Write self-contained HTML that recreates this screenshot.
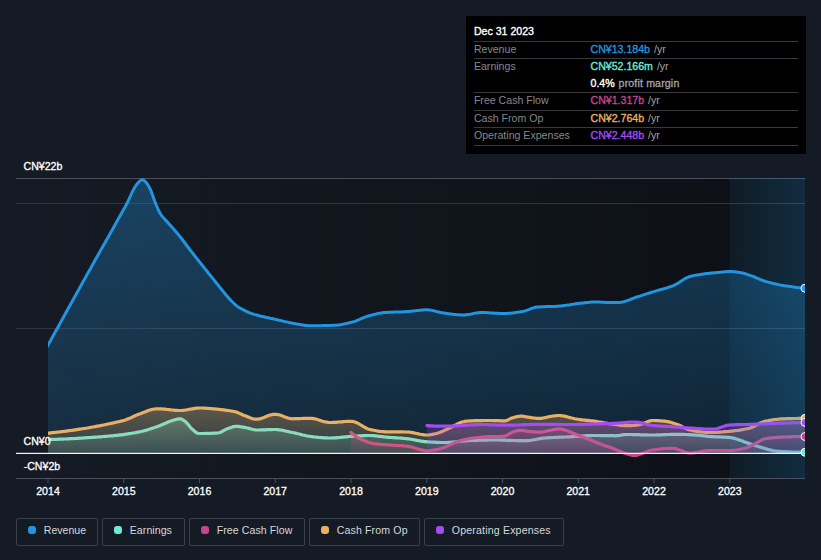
<!DOCTYPE html>
<html lang="en"><head><meta charset="utf-8"><title>Earnings and Revenue History</title>
<style>

html,body{margin:0;padding:0;}
body{width:821px;height:560px;background:#151b24;overflow:hidden;position:relative;font-family:"Liberation Sans", sans-serif;}
.t{position:absolute;white-space:nowrap;line-height:1;}
.ax{font-size:10.6px;color:#fff;-webkit-text-stroke:0.3px #fff;}
.yr{font-size:10.6px;color:#fff;-webkit-text-stroke:0.3px #fff;text-align:center;width:60px;}
#tip{position:absolute;left:466px;top:16px;width:340px;height:138px;background:#000;}
#tip .hd{font-size:10.6px;color:#fff;-webkit-text-stroke:0.35px #fff;left:7.9px;}
#tip .lb{font-size:10.6px;color:#85888d;left:7.9px;}
#tip .vl{font-size:10.6px;left:124.5px;-webkit-text-stroke:0.35px;}
#tip .vl i{font-style:normal;color:#a3a6ab;-webkit-text-stroke:0;margin-left:1px;}
#tip .vl i.pm{-webkit-text-stroke:0.3px #a3a6ab;letter-spacing:0.15px;}
#tip .sep{position:absolute;left:7.6px;width:324.4px;height:1px;background:#37393d;}
.lg{position:absolute;top:518px;height:28px;border:1px solid #3a414c;border-radius:2px;box-sizing:border-box;}
.lg b{position:absolute;top:7px;left:10.75px;width:8px;height:8px;border-radius:3px;}
.lg span{position:absolute;left:26.5px;top:6.3px;font-size:10.6px;line-height:1;color:#d6d8db;white-space:nowrap;}

</style></head><body>
<svg width="821" height="560" viewBox="0 0 821 560" style="position:absolute;left:0;top:0">
<defs>
<linearGradient id="gpast" x1="16" x2="730" y1="0" y2="0" gradientUnits="userSpaceOnUse"><stop offset="0" stop-color="#000" stop-opacity="0"/><stop offset="1" stop-color="#000" stop-opacity="0.37"/></linearGradient>
<linearGradient id="ghl" x1="730" x2="805" y1="0" y2="0" gradientUnits="userSpaceOnUse"><stop offset="0" stop-color="#2394df" stop-opacity="0.08"/><stop offset="1" stop-color="#2394df" stop-opacity="0.21"/></linearGradient>
<linearGradient id="grev" x1="0" x2="0" y1="178" y2="453.5" gradientUnits="userSpaceOnUse"><stop offset="0" stop-color="#2394df" stop-opacity="0.34"/><stop offset="1" stop-color="#2394df" stop-opacity="0.14"/></linearGradient>
<linearGradient id="gearn" x1="0" x2="0" y1="405" y2="453.5" gradientUnits="userSpaceOnUse"><stop offset="0" stop-color="#71e7d6" stop-opacity="0.34"/><stop offset="1" stop-color="#71e7d6" stop-opacity="0.12"/></linearGradient>
<linearGradient id="gfcf" x1="0" x2="0" y1="405" y2="453.5" gradientUnits="userSpaceOnUse"><stop offset="0" stop-color="#c7458b" stop-opacity="0.34"/><stop offset="1" stop-color="#c7458b" stop-opacity="0.12"/></linearGradient>
<linearGradient id="gcfo" x1="0" x2="0" y1="405" y2="453.5" gradientUnits="userSpaceOnUse"><stop offset="0" stop-color="#ebaf64" stop-opacity="0.34"/><stop offset="1" stop-color="#ebaf64" stop-opacity="0.12"/></linearGradient>
<linearGradient id="gopex" x1="0" x2="0" y1="405" y2="453.5" gradientUnits="userSpaceOnUse"><stop offset="0" stop-color="#a54bf0" stop-opacity="0.34"/><stop offset="1" stop-color="#a54bf0" stop-opacity="0.12"/></linearGradient>
<clipPath id="clip"><rect x="48" y="170" width="757" height="320"/></clipPath>
</defs>
<rect x="16" y="178" width="714" height="300.5" fill="url(#gpast)"/>
<rect x="730" y="178" width="75" height="300.5" fill="#000" fill-opacity="0.37"/>
<rect x="16" y="178.0" width="789" height="1" fill="#4a4f59"/>
<rect x="16" y="203.0" width="789" height="1" fill="#30363f"/>
<rect x="16" y="328.0" width="789" height="1" fill="#30363f"/>
<g clip-path="url(#clip)">
<path d="M45.0,350.4 L46.5,347.8 L48.0,345.1 L49.5,342.4 L51.0,339.7 L52.5,337.0 L54.0,334.3 L55.5,331.6 L57.0,328.9 L58.5,326.2 L60.0,323.5 L61.5,320.8 L63.0,318.0 L64.5,315.3 L66.0,312.6 L67.5,309.8 L69.0,307.1 L70.5,304.4 L72.0,301.6 L73.5,298.9 L75.0,296.2 L76.5,293.6 L78.0,290.9 L79.5,288.2 L81.0,285.5 L82.5,282.8 L84.0,280.1 L85.5,277.5 L87.0,274.8 L88.5,272.1 L90.0,269.4 L91.5,266.7 L93.0,264.0 L94.5,261.3 L96.0,258.6 L97.5,256.0 L99.0,253.3 L100.5,250.6 L102.0,248.0 L103.5,245.3 L105.0,242.7 L106.5,240.0 L108.0,237.4 L109.5,234.7 L111.0,232.1 L112.5,229.4 L114.0,226.7 L115.5,224.0 L117.0,221.3 L118.5,218.6 L120.0,215.9 L121.5,213.2 L123.0,210.6 L124.5,207.9 L126.0,205.2 L127.5,202.3 L129.0,199.1 L130.5,195.8 L132.0,192.5 L133.5,189.6 L135.0,187.0 L136.5,184.7 L138.0,182.8 L139.5,181.4 L141.0,180.1 L142.5,179.7 L144.0,180.4 L145.5,181.8 L147.0,183.5 L148.5,185.9 L150.0,188.7 L151.5,192.2 L153.0,196.5 L154.5,200.7 L156.0,204.5 L157.5,208.0 L159.0,211.3 L160.5,214.0 L162.0,216.1 L163.5,217.9 L165.0,219.5 L166.5,221.1 L168.0,222.7 L169.5,224.4 L171.0,226.1 L172.5,227.8 L174.0,229.5 L175.5,231.2 L177.0,232.9 L178.5,234.7 L180.0,236.6 L181.5,238.5 L183.0,240.5 L184.5,242.5 L186.0,244.5 L187.5,246.5 L189.0,248.5 L190.5,250.5 L192.0,252.4 L193.5,254.3 L195.0,256.2 L196.5,258.1 L198.0,260.0 L199.5,261.9 L201.0,263.8 L202.5,265.6 L204.0,267.5 L205.5,269.4 L207.0,271.3 L208.5,273.2 L210.0,275.0 L211.5,276.9 L213.0,278.8 L214.5,280.6 L216.0,282.5 L217.5,284.4 L219.0,286.3 L220.5,288.1 L222.0,290.0 L223.5,291.9 L225.0,293.8 L226.5,295.5 L228.0,297.3 L229.5,298.9 L231.0,300.5 L232.5,302.0 L234.0,303.5 L235.5,304.9 L237.0,306.1 L238.5,307.2 L240.0,308.0 L241.5,308.9 L243.0,309.6 L244.5,310.4 L246.0,311.2 L247.5,311.9 L249.0,312.6 L250.5,313.2 L252.0,313.7 L253.5,314.1 L255.0,314.6 L256.5,315.0 L258.0,315.4 L259.5,315.8 L261.0,316.2 L262.5,316.5 L264.0,316.8 L265.5,317.2 L267.0,317.5 L268.5,317.8 L270.0,318.2 L271.5,318.5 L273.0,318.8 L274.5,319.1 L276.0,319.5 L277.5,319.8 L279.0,320.2 L280.5,320.5 L282.0,320.9 L283.5,321.2 L285.0,321.6 L286.5,321.9 L288.0,322.3 L289.5,322.6 L291.0,322.9 L292.5,323.2 L294.0,323.5 L295.5,323.8 L297.0,324.0 L298.5,324.3 L300.0,324.5 L301.5,324.7 L303.0,325.0 L304.5,325.2 L306.0,325.4 L307.5,325.6 L309.0,325.7 L310.5,325.7 L312.0,325.7 L313.5,325.7 L315.0,325.7 L316.5,325.7 L318.0,325.7 L319.5,325.7 L321.0,325.7 L322.5,325.6 L324.0,325.6 L325.5,325.6 L327.0,325.5 L328.5,325.5 L330.0,325.4 L331.5,325.4 L333.0,325.3 L334.5,325.3 L336.0,325.2 L337.5,325.1 L339.0,324.9 L340.5,324.7 L342.0,324.4 L343.5,324.1 L345.0,323.8 L346.5,323.5 L348.0,323.1 L349.5,322.8 L351.0,322.4 L352.5,322.0 L354.0,321.6 L355.5,321.1 L357.0,320.5 L358.5,319.8 L360.0,319.2 L361.5,318.5 L363.0,317.9 L364.5,317.3 L366.0,316.7 L367.5,316.2 L369.0,315.8 L370.5,315.4 L372.0,315.0 L373.5,314.6 L375.0,314.2 L376.5,313.9 L378.0,313.5 L379.5,313.2 L381.0,313.0 L382.5,312.7 L384.0,312.6 L385.5,312.5 L387.0,312.4 L388.5,312.3 L390.0,312.3 L391.5,312.2 L393.0,312.2 L394.5,312.1 L396.0,312.1 L397.5,312.0 L399.0,312.0 L400.5,312.0 L402.0,311.9 L403.5,311.8 L405.0,311.8 L406.5,311.6 L408.0,311.5 L409.5,311.4 L411.0,311.2 L412.5,311.0 L414.0,310.9 L415.5,310.7 L417.0,310.5 L418.5,310.4 L420.0,310.2 L421.5,310.0 L423.0,309.9 L424.5,309.8 L426.0,309.8 L427.5,309.8 L429.0,309.9 L430.5,310.1 L432.0,310.4 L433.5,310.7 L435.0,311.1 L436.5,311.5 L438.0,311.8 L439.5,312.2 L441.0,312.5 L442.5,312.9 L444.0,313.1 L445.5,313.3 L447.0,313.5 L448.5,313.7 L450.0,313.9 L451.5,314.1 L453.0,314.3 L454.5,314.4 L456.0,314.6 L457.5,314.7 L459.0,314.8 L460.5,314.9 L462.0,315.0 L463.5,315.0 L465.0,315.0 L466.5,314.8 L468.0,314.6 L469.5,314.4 L471.0,314.1 L472.5,313.8 L474.0,313.4 L475.5,313.1 L477.0,312.9 L478.5,312.7 L480.0,312.5 L481.5,312.5 L483.0,312.5 L484.5,312.6 L486.0,312.6 L487.5,312.7 L489.0,312.8 L490.5,312.9 L492.0,313.0 L493.5,313.1 L495.0,313.2 L496.5,313.3 L498.0,313.3 L499.5,313.4 L501.0,313.5 L502.5,313.5 L504.0,313.5 L505.5,313.5 L507.0,313.4 L508.5,313.3 L510.0,313.2 L511.5,313.1 L513.0,312.9 L514.5,312.7 L516.0,312.5 L517.5,312.3 L519.0,312.1 L520.5,311.8 L522.0,311.6 L523.5,311.3 L525.0,310.9 L526.5,310.4 L528.0,309.9 L529.5,309.3 L531.0,308.7 L532.5,308.1 L534.0,307.7 L535.5,307.3 L537.0,307.0 L538.5,306.9 L540.0,306.9 L541.5,306.8 L543.0,306.7 L544.5,306.7 L546.0,306.6 L547.5,306.6 L549.0,306.6 L550.5,306.5 L552.0,306.5 L553.5,306.4 L555.0,306.4 L556.5,306.3 L558.0,306.2 L559.5,306.1 L561.0,306.0 L562.5,305.8 L564.0,305.6 L565.5,305.4 L567.0,305.1 L568.5,304.9 L570.0,304.7 L571.5,304.4 L573.0,304.2 L574.5,304.0 L576.0,303.7 L577.5,303.5 L579.0,303.4 L580.5,303.2 L582.0,303.0 L583.5,302.9 L585.0,302.7 L586.5,302.5 L588.0,302.4 L589.5,302.3 L591.0,302.1 L592.5,302.1 L594.0,302.0 L595.5,302.0 L597.0,302.0 L598.5,302.1 L600.0,302.1 L601.5,302.2 L603.0,302.3 L604.5,302.3 L606.0,302.4 L607.5,302.5 L609.0,302.5 L610.5,302.6 L612.0,302.6 L613.5,302.6 L615.0,302.6 L616.5,302.6 L618.0,302.5 L619.5,302.5 L621.0,302.3 L622.5,302.0 L624.0,301.7 L625.5,301.2 L627.0,300.7 L628.5,300.1 L630.0,299.6 L631.5,299.0 L633.0,298.4 L634.5,297.8 L636.0,297.2 L637.5,296.8 L639.0,296.3 L640.5,295.8 L642.0,295.3 L643.5,294.9 L645.0,294.4 L646.5,293.9 L648.0,293.4 L649.5,293.0 L651.0,292.5 L652.5,292.0 L654.0,291.6 L655.5,291.1 L657.0,290.7 L658.5,290.2 L660.0,289.8 L661.5,289.4 L663.0,289.0 L664.5,288.6 L666.0,288.2 L667.5,287.7 L669.0,287.2 L670.5,286.7 L672.0,286.2 L673.5,285.6 L675.0,284.8 L676.5,284.0 L678.0,283.1 L679.5,282.2 L681.0,281.2 L682.5,280.2 L684.0,279.3 L685.5,278.4 L687.0,277.7 L688.5,277.0 L690.0,276.5 L691.5,276.1 L693.0,275.7 L694.5,275.4 L696.0,275.1 L697.5,274.9 L699.0,274.7 L700.5,274.4 L702.0,274.2 L703.5,274.0 L705.0,273.8 L706.5,273.6 L708.0,273.5 L709.5,273.3 L711.0,273.1 L712.5,273.0 L714.0,272.8 L715.5,272.7 L717.0,272.5 L718.5,272.4 L720.0,272.2 L721.5,272.1 L723.0,271.9 L724.5,271.8 L726.0,271.7 L727.5,271.6 L729.0,271.5 L730.5,271.5 L732.0,271.6 L733.5,271.7 L735.0,271.8 L736.5,272.0 L738.0,272.2 L739.5,272.4 L741.0,272.7 L742.5,273.0 L744.0,273.4 L745.5,273.8 L747.0,274.3 L748.5,274.8 L750.0,275.4 L751.5,275.9 L753.0,276.4 L754.5,277.0 L756.0,277.6 L757.5,278.3 L759.0,278.9 L760.5,279.6 L762.0,280.2 L763.5,280.8 L765.0,281.2 L766.5,281.7 L768.0,282.1 L769.5,282.5 L771.0,282.9 L772.5,283.3 L774.0,283.6 L775.5,284.0 L777.0,284.3 L778.5,284.6 L780.0,284.9 L781.5,285.2 L783.0,285.4 L784.5,285.7 L786.0,285.9 L787.5,286.1 L789.0,286.4 L790.5,286.6 L792.0,286.8 L793.5,287.0 L795.0,287.2 L796.5,287.4 L798.0,287.6 L799.5,287.7 L801.0,287.9 L802.5,288.0 L804.0,288.1 L805.0,288.2 L805.0,453.5 L45.0,453.5 Z" fill="url(#grev)"/>
<path d="M45.0,350.4 L46.5,347.8 L48.0,345.1 L49.5,342.4 L51.0,339.7 L52.5,337.0 L54.0,334.3 L55.5,331.6 L57.0,328.9 L58.5,326.2 L60.0,323.5 L61.5,320.8 L63.0,318.0 L64.5,315.3 L66.0,312.6 L67.5,309.8 L69.0,307.1 L70.5,304.4 L72.0,301.6 L73.5,298.9 L75.0,296.2 L76.5,293.6 L78.0,290.9 L79.5,288.2 L81.0,285.5 L82.5,282.8 L84.0,280.1 L85.5,277.5 L87.0,274.8 L88.5,272.1 L90.0,269.4 L91.5,266.7 L93.0,264.0 L94.5,261.3 L96.0,258.6 L97.5,256.0 L99.0,253.3 L100.5,250.6 L102.0,248.0 L103.5,245.3 L105.0,242.7 L106.5,240.0 L108.0,237.4 L109.5,234.7 L111.0,232.1 L112.5,229.4 L114.0,226.7 L115.5,224.0 L117.0,221.3 L118.5,218.6 L120.0,215.9 L121.5,213.2 L123.0,210.6 L124.5,207.9 L126.0,205.2 L127.5,202.3 L129.0,199.1 L130.5,195.8 L132.0,192.5 L133.5,189.6 L135.0,187.0 L136.5,184.7 L138.0,182.8 L139.5,181.4 L141.0,180.1 L142.5,179.7 L144.0,180.4 L145.5,181.8 L147.0,183.5 L148.5,185.9 L150.0,188.7 L151.5,192.2 L153.0,196.5 L154.5,200.7 L156.0,204.5 L157.5,208.0 L159.0,211.3 L160.5,214.0 L162.0,216.1 L163.5,217.9 L165.0,219.5 L166.5,221.1 L168.0,222.7 L169.5,224.4 L171.0,226.1 L172.5,227.8 L174.0,229.5 L175.5,231.2 L177.0,232.9 L178.5,234.7 L180.0,236.6 L181.5,238.5 L183.0,240.5 L184.5,242.5 L186.0,244.5 L187.5,246.5 L189.0,248.5 L190.5,250.5 L192.0,252.4 L193.5,254.3 L195.0,256.2 L196.5,258.1 L198.0,260.0 L199.5,261.9 L201.0,263.8 L202.5,265.6 L204.0,267.5 L205.5,269.4 L207.0,271.3 L208.5,273.2 L210.0,275.0 L211.5,276.9 L213.0,278.8 L214.5,280.6 L216.0,282.5 L217.5,284.4 L219.0,286.3 L220.5,288.1 L222.0,290.0 L223.5,291.9 L225.0,293.8 L226.5,295.5 L228.0,297.3 L229.5,298.9 L231.0,300.5 L232.5,302.0 L234.0,303.5 L235.5,304.9 L237.0,306.1 L238.5,307.2 L240.0,308.0 L241.5,308.9 L243.0,309.6 L244.5,310.4 L246.0,311.2 L247.5,311.9 L249.0,312.6 L250.5,313.2 L252.0,313.7 L253.5,314.1 L255.0,314.6 L256.5,315.0 L258.0,315.4 L259.5,315.8 L261.0,316.2 L262.5,316.5 L264.0,316.8 L265.5,317.2 L267.0,317.5 L268.5,317.8 L270.0,318.2 L271.5,318.5 L273.0,318.8 L274.5,319.1 L276.0,319.5 L277.5,319.8 L279.0,320.2 L280.5,320.5 L282.0,320.9 L283.5,321.2 L285.0,321.6 L286.5,321.9 L288.0,322.3 L289.5,322.6 L291.0,322.9 L292.5,323.2 L294.0,323.5 L295.5,323.8 L297.0,324.0 L298.5,324.3 L300.0,324.5 L301.5,324.7 L303.0,325.0 L304.5,325.2 L306.0,325.4 L307.5,325.6 L309.0,325.7 L310.5,325.7 L312.0,325.7 L313.5,325.7 L315.0,325.7 L316.5,325.7 L318.0,325.7 L319.5,325.7 L321.0,325.7 L322.5,325.6 L324.0,325.6 L325.5,325.6 L327.0,325.5 L328.5,325.5 L330.0,325.4 L331.5,325.4 L333.0,325.3 L334.5,325.3 L336.0,325.2 L337.5,325.1 L339.0,324.9 L340.5,324.7 L342.0,324.4 L343.5,324.1 L345.0,323.8 L346.5,323.5 L348.0,323.1 L349.5,322.8 L351.0,322.4 L352.5,322.0 L354.0,321.6 L355.5,321.1 L357.0,320.5 L358.5,319.8 L360.0,319.2 L361.5,318.5 L363.0,317.9 L364.5,317.3 L366.0,316.7 L367.5,316.2 L369.0,315.8 L370.5,315.4 L372.0,315.0 L373.5,314.6 L375.0,314.2 L376.5,313.9 L378.0,313.5 L379.5,313.2 L381.0,313.0 L382.5,312.7 L384.0,312.6 L385.5,312.5 L387.0,312.4 L388.5,312.3 L390.0,312.3 L391.5,312.2 L393.0,312.2 L394.5,312.1 L396.0,312.1 L397.5,312.0 L399.0,312.0 L400.5,312.0 L402.0,311.9 L403.5,311.8 L405.0,311.8 L406.5,311.6 L408.0,311.5 L409.5,311.4 L411.0,311.2 L412.5,311.0 L414.0,310.9 L415.5,310.7 L417.0,310.5 L418.5,310.4 L420.0,310.2 L421.5,310.0 L423.0,309.9 L424.5,309.8 L426.0,309.8 L427.5,309.8 L429.0,309.9 L430.5,310.1 L432.0,310.4 L433.5,310.7 L435.0,311.1 L436.5,311.5 L438.0,311.8 L439.5,312.2 L441.0,312.5 L442.5,312.9 L444.0,313.1 L445.5,313.3 L447.0,313.5 L448.5,313.7 L450.0,313.9 L451.5,314.1 L453.0,314.3 L454.5,314.4 L456.0,314.6 L457.5,314.7 L459.0,314.8 L460.5,314.9 L462.0,315.0 L463.5,315.0 L465.0,315.0 L466.5,314.8 L468.0,314.6 L469.5,314.4 L471.0,314.1 L472.5,313.8 L474.0,313.4 L475.5,313.1 L477.0,312.9 L478.5,312.7 L480.0,312.5 L481.5,312.5 L483.0,312.5 L484.5,312.6 L486.0,312.6 L487.5,312.7 L489.0,312.8 L490.5,312.9 L492.0,313.0 L493.5,313.1 L495.0,313.2 L496.5,313.3 L498.0,313.3 L499.5,313.4 L501.0,313.5 L502.5,313.5 L504.0,313.5 L505.5,313.5 L507.0,313.4 L508.5,313.3 L510.0,313.2 L511.5,313.1 L513.0,312.9 L514.5,312.7 L516.0,312.5 L517.5,312.3 L519.0,312.1 L520.5,311.8 L522.0,311.6 L523.5,311.3 L525.0,310.9 L526.5,310.4 L528.0,309.9 L529.5,309.3 L531.0,308.7 L532.5,308.1 L534.0,307.7 L535.5,307.3 L537.0,307.0 L538.5,306.9 L540.0,306.9 L541.5,306.8 L543.0,306.7 L544.5,306.7 L546.0,306.6 L547.5,306.6 L549.0,306.6 L550.5,306.5 L552.0,306.5 L553.5,306.4 L555.0,306.4 L556.5,306.3 L558.0,306.2 L559.5,306.1 L561.0,306.0 L562.5,305.8 L564.0,305.6 L565.5,305.4 L567.0,305.1 L568.5,304.9 L570.0,304.7 L571.5,304.4 L573.0,304.2 L574.5,304.0 L576.0,303.7 L577.5,303.5 L579.0,303.4 L580.5,303.2 L582.0,303.0 L583.5,302.9 L585.0,302.7 L586.5,302.5 L588.0,302.4 L589.5,302.3 L591.0,302.1 L592.5,302.1 L594.0,302.0 L595.5,302.0 L597.0,302.0 L598.5,302.1 L600.0,302.1 L601.5,302.2 L603.0,302.3 L604.5,302.3 L606.0,302.4 L607.5,302.5 L609.0,302.5 L610.5,302.6 L612.0,302.6 L613.5,302.6 L615.0,302.6 L616.5,302.6 L618.0,302.5 L619.5,302.5 L621.0,302.3 L622.5,302.0 L624.0,301.7 L625.5,301.2 L627.0,300.7 L628.5,300.1 L630.0,299.6 L631.5,299.0 L633.0,298.4 L634.5,297.8 L636.0,297.2 L637.5,296.8 L639.0,296.3 L640.5,295.8 L642.0,295.3 L643.5,294.9 L645.0,294.4 L646.5,293.9 L648.0,293.4 L649.5,293.0 L651.0,292.5 L652.5,292.0 L654.0,291.6 L655.5,291.1 L657.0,290.7 L658.5,290.2 L660.0,289.8 L661.5,289.4 L663.0,289.0 L664.5,288.6 L666.0,288.2 L667.5,287.7 L669.0,287.2 L670.5,286.7 L672.0,286.2 L673.5,285.6 L675.0,284.8 L676.5,284.0 L678.0,283.1 L679.5,282.2 L681.0,281.2 L682.5,280.2 L684.0,279.3 L685.5,278.4 L687.0,277.7 L688.5,277.0 L690.0,276.5 L691.5,276.1 L693.0,275.7 L694.5,275.4 L696.0,275.1 L697.5,274.9 L699.0,274.7 L700.5,274.4 L702.0,274.2 L703.5,274.0 L705.0,273.8 L706.5,273.6 L708.0,273.5 L709.5,273.3 L711.0,273.1 L712.5,273.0 L714.0,272.8 L715.5,272.7 L717.0,272.5 L718.5,272.4 L720.0,272.2 L721.5,272.1 L723.0,271.9 L724.5,271.8 L726.0,271.7 L727.5,271.6 L729.0,271.5 L730.5,271.5 L732.0,271.6 L733.5,271.7 L735.0,271.8 L736.5,272.0 L738.0,272.2 L739.5,272.4 L741.0,272.7 L742.5,273.0 L744.0,273.4 L745.5,273.8 L747.0,274.3 L748.5,274.8 L750.0,275.4 L751.5,275.9 L753.0,276.4 L754.5,277.0 L756.0,277.6 L757.5,278.3 L759.0,278.9 L760.5,279.6 L762.0,280.2 L763.5,280.8 L765.0,281.2 L766.5,281.7 L768.0,282.1 L769.5,282.5 L771.0,282.9 L772.5,283.3 L774.0,283.6 L775.5,284.0 L777.0,284.3 L778.5,284.6 L780.0,284.9 L781.5,285.2 L783.0,285.4 L784.5,285.7 L786.0,285.9 L787.5,286.1 L789.0,286.4 L790.5,286.6 L792.0,286.8 L793.5,287.0 L795.0,287.2 L796.5,287.4 L798.0,287.6 L799.5,287.7 L801.0,287.9 L802.5,288.0 L804.0,288.1 L805.0,288.2" fill="none" stroke="#2394df" stroke-width="3.0" stroke-linejoin="round" stroke-linecap="round"/>
<path d="M45.0,439.6 L46.5,439.5 L48.0,439.5 L49.5,439.5 L51.0,439.4 L52.5,439.4 L54.0,439.3 L55.5,439.3 L57.0,439.3 L58.5,439.2 L60.0,439.2 L61.5,439.1 L63.0,439.1 L64.5,439.0 L66.0,439.0 L67.5,438.9 L69.0,438.8 L70.5,438.7 L72.0,438.7 L73.5,438.6 L75.0,438.5 L76.5,438.4 L78.0,438.3 L79.5,438.2 L81.0,438.1 L82.5,438.0 L84.0,437.9 L85.5,437.8 L87.0,437.7 L88.5,437.6 L90.0,437.5 L91.5,437.4 L93.0,437.3 L94.5,437.2 L96.0,437.1 L97.5,437.0 L99.0,436.9 L100.5,436.8 L102.0,436.7 L103.5,436.5 L105.0,436.4 L106.5,436.3 L108.0,436.2 L109.5,436.0 L111.0,435.9 L112.5,435.8 L114.0,435.6 L115.5,435.4 L117.0,435.3 L118.5,435.1 L120.0,434.9 L121.5,434.8 L123.0,434.6 L124.5,434.4 L126.0,434.2 L127.5,433.9 L129.0,433.7 L130.5,433.5 L132.0,433.2 L133.5,433.0 L135.0,432.7 L136.5,432.4 L138.0,432.2 L139.5,431.9 L141.0,431.5 L142.5,431.2 L144.0,430.8 L145.5,430.4 L147.0,429.9 L148.5,429.5 L150.0,429.0 L151.5,428.5 L153.0,428.0 L154.5,427.5 L156.0,426.9 L157.5,426.4 L159.0,425.9 L160.5,425.3 L162.0,424.7 L163.5,424.1 L165.0,423.4 L166.5,422.8 L168.0,422.1 L169.5,421.5 L171.0,421.0 L172.5,420.5 L174.0,420.0 L175.5,419.6 L177.0,419.2 L178.5,418.9 L180.0,418.8 L181.5,419.1 L183.0,419.9 L184.5,420.9 L186.0,422.1 L187.5,423.7 L189.0,425.6 L190.5,427.5 L192.0,429.1 L193.5,430.3 L195.0,431.6 L196.5,432.7 L198.0,433.4 L199.5,433.5 L201.0,433.5 L202.5,433.5 L204.0,433.5 L205.5,433.4 L207.0,433.4 L208.5,433.4 L210.0,433.3 L211.5,433.3 L213.0,433.2 L214.5,433.2 L216.0,433.1 L217.5,433.0 L219.0,432.7 L220.5,432.2 L222.0,431.5 L223.5,430.7 L225.0,429.9 L226.5,429.1 L228.0,428.6 L229.5,428.0 L231.0,427.4 L232.5,426.9 L234.0,426.5 L235.5,426.3 L237.0,426.3 L238.5,426.4 L240.0,426.6 L241.5,426.9 L243.0,427.1 L244.5,427.4 L246.0,427.7 L247.5,428.0 L249.0,428.4 L250.5,428.8 L252.0,429.2 L253.5,429.5 L255.0,429.8 L256.5,430.0 L258.0,430.0 L259.5,430.0 L261.0,429.9 L262.5,429.9 L264.0,429.8 L265.5,429.8 L267.0,429.7 L268.5,429.7 L270.0,429.6 L271.5,429.6 L273.0,429.5 L274.5,429.5 L276.0,429.5 L277.5,429.6 L279.0,429.8 L280.5,430.0 L282.0,430.2 L283.5,430.5 L285.0,430.9 L286.5,431.2 L288.0,431.5 L289.5,431.9 L291.0,432.2 L292.5,432.5 L294.0,432.8 L295.5,433.1 L297.0,433.5 L298.5,433.8 L300.0,434.2 L301.5,434.6 L303.0,435.0 L304.5,435.3 L306.0,435.7 L307.5,436.0 L309.0,436.2 L310.5,436.5 L312.0,436.7 L313.5,436.9 L315.0,437.0 L316.5,437.2 L318.0,437.3 L319.5,437.5 L321.0,437.6 L322.5,437.7 L324.0,437.8 L325.5,437.9 L327.0,437.9 L328.5,438.0 L330.0,438.0 L331.5,438.0 L333.0,437.9 L334.5,437.9 L336.0,437.8 L337.5,437.6 L339.0,437.5 L340.5,437.4 L342.0,437.2 L343.5,437.1 L345.0,436.9 L346.5,436.8 L348.0,436.6 L349.5,436.5 L351.0,436.4 L352.5,436.3 L354.0,436.2 L355.5,436.1 L357.0,436.0 L358.5,435.9 L360.0,435.9 L361.5,435.8 L363.0,435.7 L364.5,435.6 L366.0,435.6 L367.5,435.5 L369.0,435.5 L370.5,435.5 L372.0,435.6 L373.5,435.7 L375.0,435.8 L376.5,436.0 L378.0,436.1 L379.5,436.3 L381.0,436.5 L382.5,436.7 L384.0,436.9 L385.5,437.0 L387.0,437.2 L388.5,437.3 L390.0,437.4 L391.5,437.5 L393.0,437.6 L394.5,437.7 L396.0,437.8 L397.5,437.9 L399.0,438.0 L400.5,438.1 L402.0,438.2 L403.5,438.4 L405.0,438.5 L406.5,438.6 L408.0,438.8 L409.5,439.0 L411.0,439.2 L412.5,439.5 L414.0,439.8 L415.5,440.1 L417.0,440.4 L418.5,440.7 L420.0,440.9 L421.5,441.2 L423.0,441.4 L424.5,441.6 L426.0,441.7 L427.5,441.8 L429.0,441.9 L430.5,442.0 L432.0,442.1 L433.5,442.2 L435.0,442.2 L436.5,442.3 L438.0,442.4 L439.5,442.4 L441.0,442.5 L442.5,442.5 L444.0,442.5 L445.5,442.5 L447.0,442.5 L448.5,442.4 L450.0,442.3 L451.5,442.2 L453.0,442.1 L454.5,441.9 L456.0,441.8 L457.5,441.6 L459.0,441.4 L460.5,441.3 L462.0,441.1 L463.5,440.9 L465.0,440.8 L466.5,440.7 L468.0,440.6 L469.5,440.5 L471.0,440.5 L472.5,440.4 L474.0,440.4 L475.5,440.3 L477.0,440.3 L478.5,440.2 L480.0,440.2 L481.5,440.2 L483.0,440.1 L484.5,440.1 L486.0,440.1 L487.5,440.1 L489.0,440.0 L490.5,440.0 L492.0,440.0 L493.5,440.0 L495.0,440.0 L496.5,440.0 L498.0,440.0 L499.5,440.0 L501.0,440.1 L502.5,440.1 L504.0,440.2 L505.5,440.2 L507.0,440.3 L508.5,440.3 L510.0,440.4 L511.5,440.4 L513.0,440.5 L514.5,440.5 L516.0,440.6 L517.5,440.6 L519.0,440.7 L520.5,440.7 L522.0,440.7 L523.5,440.7 L525.0,440.8 L526.5,440.7 L528.0,440.6 L529.5,440.5 L531.0,440.3 L532.5,440.0 L534.0,439.7 L535.5,439.5 L537.0,439.2 L538.5,438.9 L540.0,438.6 L541.5,438.4 L543.0,438.2 L544.5,438.0 L546.0,437.9 L547.5,437.8 L549.0,437.7 L550.5,437.6 L552.0,437.6 L553.5,437.5 L555.0,437.4 L556.5,437.3 L558.0,437.3 L559.5,437.2 L561.0,437.1 L562.5,437.1 L564.0,437.0 L565.5,437.0 L567.0,436.9 L568.5,436.8 L570.0,436.8 L571.5,436.7 L573.0,436.6 L574.5,436.5 L576.0,436.4 L577.5,436.3 L579.0,436.2 L580.5,436.1 L582.0,436.0 L583.5,435.9 L585.0,435.8 L586.5,435.7 L588.0,435.7 L589.5,435.6 L591.0,435.6 L592.5,435.5 L594.0,435.5 L595.5,435.5 L597.0,435.5 L598.5,435.5 L600.0,435.5 L601.5,435.6 L603.0,435.6 L604.5,435.6 L606.0,435.6 L607.5,435.7 L609.0,435.7 L610.5,435.7 L612.0,435.7 L613.5,435.7 L615.0,435.8 L616.5,435.7 L618.0,435.6 L619.5,435.4 L621.0,435.2 L622.5,434.9 L624.0,434.7 L625.5,434.6 L627.0,434.5 L628.5,434.5 L630.0,434.5 L631.5,434.5 L633.0,434.6 L634.5,434.6 L636.0,434.6 L637.5,434.7 L639.0,434.7 L640.5,434.8 L642.0,434.8 L643.5,434.9 L645.0,434.9 L646.5,434.9 L648.0,435.0 L649.5,435.0 L651.0,435.0 L652.5,435.0 L654.0,435.0 L655.5,435.0 L657.0,434.9 L658.5,434.9 L660.0,434.8 L661.5,434.8 L663.0,434.7 L664.5,434.6 L666.0,434.6 L667.5,434.5 L669.0,434.5 L670.5,434.4 L672.0,434.3 L673.5,434.3 L675.0,434.3 L676.5,434.3 L678.0,434.3 L679.5,434.3 L681.0,434.3 L682.5,434.3 L684.0,434.4 L685.5,434.5 L687.0,434.5 L688.5,434.6 L690.0,434.7 L691.5,434.8 L693.0,434.9 L694.5,435.0 L696.0,435.1 L697.5,435.2 L699.0,435.3 L700.5,435.5 L702.0,435.7 L703.5,435.9 L705.0,436.0 L706.5,436.2 L708.0,436.3 L709.5,436.5 L711.0,436.6 L712.5,436.6 L714.0,436.7 L715.5,436.8 L717.0,436.8 L718.5,436.9 L720.0,436.9 L721.5,437.0 L723.0,437.1 L724.5,437.1 L726.0,437.2 L727.5,437.3 L729.0,437.4 L730.5,437.6 L732.0,437.8 L733.5,438.1 L735.0,438.5 L736.5,439.0 L738.0,439.5 L739.5,440.0 L741.0,440.6 L742.5,441.1 L744.0,441.7 L745.5,442.2 L747.0,442.7 L748.5,443.2 L750.0,443.7 L751.5,444.2 L753.0,444.7 L754.5,445.3 L756.0,445.8 L757.5,446.2 L759.0,446.7 L760.5,447.1 L762.0,447.6 L763.5,448.0 L765.0,448.5 L766.5,448.9 L768.0,449.4 L769.5,449.8 L771.0,450.1 L772.5,450.5 L774.0,450.8 L775.5,451.0 L777.0,451.2 L778.5,451.3 L780.0,451.4 L781.5,451.5 L783.0,451.6 L784.5,451.7 L786.0,451.7 L787.5,451.8 L789.0,451.9 L790.5,451.9 L792.0,452.0 L793.5,452.0 L795.0,452.1 L796.5,452.1 L798.0,452.2 L799.5,452.2 L801.0,452.2 L802.5,452.3 L804.0,452.3 L805.0,452.3 L805.0,453.5 L45.0,453.5 Z" fill="url(#gearn)"/>
<path d="M45.0,439.6 L46.5,439.5 L48.0,439.5 L49.5,439.5 L51.0,439.4 L52.5,439.4 L54.0,439.3 L55.5,439.3 L57.0,439.3 L58.5,439.2 L60.0,439.2 L61.5,439.1 L63.0,439.1 L64.5,439.0 L66.0,439.0 L67.5,438.9 L69.0,438.8 L70.5,438.7 L72.0,438.7 L73.5,438.6 L75.0,438.5 L76.5,438.4 L78.0,438.3 L79.5,438.2 L81.0,438.1 L82.5,438.0 L84.0,437.9 L85.5,437.8 L87.0,437.7 L88.5,437.6 L90.0,437.5 L91.5,437.4 L93.0,437.3 L94.5,437.2 L96.0,437.1 L97.5,437.0 L99.0,436.9 L100.5,436.8 L102.0,436.7 L103.5,436.5 L105.0,436.4 L106.5,436.3 L108.0,436.2 L109.5,436.0 L111.0,435.9 L112.5,435.8 L114.0,435.6 L115.5,435.4 L117.0,435.3 L118.5,435.1 L120.0,434.9 L121.5,434.8 L123.0,434.6 L124.5,434.4 L126.0,434.2 L127.5,433.9 L129.0,433.7 L130.5,433.5 L132.0,433.2 L133.5,433.0 L135.0,432.7 L136.5,432.4 L138.0,432.2 L139.5,431.9 L141.0,431.5 L142.5,431.2 L144.0,430.8 L145.5,430.4 L147.0,429.9 L148.5,429.5 L150.0,429.0 L151.5,428.5 L153.0,428.0 L154.5,427.5 L156.0,426.9 L157.5,426.4 L159.0,425.9 L160.5,425.3 L162.0,424.7 L163.5,424.1 L165.0,423.4 L166.5,422.8 L168.0,422.1 L169.5,421.5 L171.0,421.0 L172.5,420.5 L174.0,420.0 L175.5,419.6 L177.0,419.2 L178.5,418.9 L180.0,418.8 L181.5,419.1 L183.0,419.9 L184.5,420.9 L186.0,422.1 L187.5,423.7 L189.0,425.6 L190.5,427.5 L192.0,429.1 L193.5,430.3 L195.0,431.6 L196.5,432.7 L198.0,433.4 L199.5,433.5 L201.0,433.5 L202.5,433.5 L204.0,433.5 L205.5,433.4 L207.0,433.4 L208.5,433.4 L210.0,433.3 L211.5,433.3 L213.0,433.2 L214.5,433.2 L216.0,433.1 L217.5,433.0 L219.0,432.7 L220.5,432.2 L222.0,431.5 L223.5,430.7 L225.0,429.9 L226.5,429.1 L228.0,428.6 L229.5,428.0 L231.0,427.4 L232.5,426.9 L234.0,426.5 L235.5,426.3 L237.0,426.3 L238.5,426.4 L240.0,426.6 L241.5,426.9 L243.0,427.1 L244.5,427.4 L246.0,427.7 L247.5,428.0 L249.0,428.4 L250.5,428.8 L252.0,429.2 L253.5,429.5 L255.0,429.8 L256.5,430.0 L258.0,430.0 L259.5,430.0 L261.0,429.9 L262.5,429.9 L264.0,429.8 L265.5,429.8 L267.0,429.7 L268.5,429.7 L270.0,429.6 L271.5,429.6 L273.0,429.5 L274.5,429.5 L276.0,429.5 L277.5,429.6 L279.0,429.8 L280.5,430.0 L282.0,430.2 L283.5,430.5 L285.0,430.9 L286.5,431.2 L288.0,431.5 L289.5,431.9 L291.0,432.2 L292.5,432.5 L294.0,432.8 L295.5,433.1 L297.0,433.5 L298.5,433.8 L300.0,434.2 L301.5,434.6 L303.0,435.0 L304.5,435.3 L306.0,435.7 L307.5,436.0 L309.0,436.2 L310.5,436.5 L312.0,436.7 L313.5,436.9 L315.0,437.0 L316.5,437.2 L318.0,437.3 L319.5,437.5 L321.0,437.6 L322.5,437.7 L324.0,437.8 L325.5,437.9 L327.0,437.9 L328.5,438.0 L330.0,438.0 L331.5,438.0 L333.0,437.9 L334.5,437.9 L336.0,437.8 L337.5,437.6 L339.0,437.5 L340.5,437.4 L342.0,437.2 L343.5,437.1 L345.0,436.9 L346.5,436.8 L348.0,436.6 L349.5,436.5 L351.0,436.4 L352.5,436.3 L354.0,436.2 L355.5,436.1 L357.0,436.0 L358.5,435.9 L360.0,435.9 L361.5,435.8 L363.0,435.7 L364.5,435.6 L366.0,435.6 L367.5,435.5 L369.0,435.5 L370.5,435.5 L372.0,435.6 L373.5,435.7 L375.0,435.8 L376.5,436.0 L378.0,436.1 L379.5,436.3 L381.0,436.5 L382.5,436.7 L384.0,436.9 L385.5,437.0 L387.0,437.2 L388.5,437.3 L390.0,437.4 L391.5,437.5 L393.0,437.6 L394.5,437.7 L396.0,437.8 L397.5,437.9 L399.0,438.0 L400.5,438.1 L402.0,438.2 L403.5,438.4 L405.0,438.5 L406.5,438.6 L408.0,438.8 L409.5,439.0 L411.0,439.2 L412.5,439.5 L414.0,439.8 L415.5,440.1 L417.0,440.4 L418.5,440.7 L420.0,440.9 L421.5,441.2 L423.0,441.4 L424.5,441.6 L426.0,441.7 L427.5,441.8 L429.0,441.9 L430.5,442.0 L432.0,442.1 L433.5,442.2 L435.0,442.2 L436.5,442.3 L438.0,442.4 L439.5,442.4 L441.0,442.5 L442.5,442.5 L444.0,442.5 L445.5,442.5 L447.0,442.5 L448.5,442.4 L450.0,442.3 L451.5,442.2 L453.0,442.1 L454.5,441.9 L456.0,441.8 L457.5,441.6 L459.0,441.4 L460.5,441.3 L462.0,441.1 L463.5,440.9 L465.0,440.8 L466.5,440.7 L468.0,440.6 L469.5,440.5 L471.0,440.5 L472.5,440.4 L474.0,440.4 L475.5,440.3 L477.0,440.3 L478.5,440.2 L480.0,440.2 L481.5,440.2 L483.0,440.1 L484.5,440.1 L486.0,440.1 L487.5,440.1 L489.0,440.0 L490.5,440.0 L492.0,440.0 L493.5,440.0 L495.0,440.0 L496.5,440.0 L498.0,440.0 L499.5,440.0 L501.0,440.1 L502.5,440.1 L504.0,440.2 L505.5,440.2 L507.0,440.3 L508.5,440.3 L510.0,440.4 L511.5,440.4 L513.0,440.5 L514.5,440.5 L516.0,440.6 L517.5,440.6 L519.0,440.7 L520.5,440.7 L522.0,440.7 L523.5,440.7 L525.0,440.8 L526.5,440.7 L528.0,440.6 L529.5,440.5 L531.0,440.3 L532.5,440.0 L534.0,439.7 L535.5,439.5 L537.0,439.2 L538.5,438.9 L540.0,438.6 L541.5,438.4 L543.0,438.2 L544.5,438.0 L546.0,437.9 L547.5,437.8 L549.0,437.7 L550.5,437.6 L552.0,437.6 L553.5,437.5 L555.0,437.4 L556.5,437.3 L558.0,437.3 L559.5,437.2 L561.0,437.1 L562.5,437.1 L564.0,437.0 L565.5,437.0 L567.0,436.9 L568.5,436.8 L570.0,436.8 L571.5,436.7 L573.0,436.6 L574.5,436.5 L576.0,436.4 L577.5,436.3 L579.0,436.2 L580.5,436.1 L582.0,436.0 L583.5,435.9 L585.0,435.8 L586.5,435.7 L588.0,435.7 L589.5,435.6 L591.0,435.6 L592.5,435.5 L594.0,435.5 L595.5,435.5 L597.0,435.5 L598.5,435.5 L600.0,435.5 L601.5,435.6 L603.0,435.6 L604.5,435.6 L606.0,435.6 L607.5,435.7 L609.0,435.7 L610.5,435.7 L612.0,435.7 L613.5,435.7 L615.0,435.8 L616.5,435.7 L618.0,435.6 L619.5,435.4 L621.0,435.2 L622.5,434.9 L624.0,434.7 L625.5,434.6 L627.0,434.5 L628.5,434.5 L630.0,434.5 L631.5,434.5 L633.0,434.6 L634.5,434.6 L636.0,434.6 L637.5,434.7 L639.0,434.7 L640.5,434.8 L642.0,434.8 L643.5,434.9 L645.0,434.9 L646.5,434.9 L648.0,435.0 L649.5,435.0 L651.0,435.0 L652.5,435.0 L654.0,435.0 L655.5,435.0 L657.0,434.9 L658.5,434.9 L660.0,434.8 L661.5,434.8 L663.0,434.7 L664.5,434.6 L666.0,434.6 L667.5,434.5 L669.0,434.5 L670.5,434.4 L672.0,434.3 L673.5,434.3 L675.0,434.3 L676.5,434.3 L678.0,434.3 L679.5,434.3 L681.0,434.3 L682.5,434.3 L684.0,434.4 L685.5,434.5 L687.0,434.5 L688.5,434.6 L690.0,434.7 L691.5,434.8 L693.0,434.9 L694.5,435.0 L696.0,435.1 L697.5,435.2 L699.0,435.3 L700.5,435.5 L702.0,435.7 L703.5,435.9 L705.0,436.0 L706.5,436.2 L708.0,436.3 L709.5,436.5 L711.0,436.6 L712.5,436.6 L714.0,436.7 L715.5,436.8 L717.0,436.8 L718.5,436.9 L720.0,436.9 L721.5,437.0 L723.0,437.1 L724.5,437.1 L726.0,437.2 L727.5,437.3 L729.0,437.4 L730.5,437.6 L732.0,437.8 L733.5,438.1 L735.0,438.5 L736.5,439.0 L738.0,439.5 L739.5,440.0 L741.0,440.6 L742.5,441.1 L744.0,441.7 L745.5,442.2 L747.0,442.7 L748.5,443.2 L750.0,443.7 L751.5,444.2 L753.0,444.7 L754.5,445.3 L756.0,445.8 L757.5,446.2 L759.0,446.7 L760.5,447.1 L762.0,447.6 L763.5,448.0 L765.0,448.5 L766.5,448.9 L768.0,449.4 L769.5,449.8 L771.0,450.1 L772.5,450.5 L774.0,450.8 L775.5,451.0 L777.0,451.2 L778.5,451.3 L780.0,451.4 L781.5,451.5 L783.0,451.6 L784.5,451.7 L786.0,451.7 L787.5,451.8 L789.0,451.9 L790.5,451.9 L792.0,452.0 L793.5,452.0 L795.0,452.1 L796.5,452.1 L798.0,452.2 L799.5,452.2 L801.0,452.2 L802.5,452.3 L804.0,452.3 L805.0,452.3" fill="none" stroke="#71e7d6" stroke-width="3.2" stroke-linejoin="round" stroke-linecap="round"/>
<path d="M351.0,432.5 L352.5,433.7 L354.0,434.9 L355.5,436.0 L357.0,437.1 L358.5,438.0 L360.0,438.8 L361.5,439.4 L363.0,440.1 L364.5,440.7 L366.0,441.3 L367.5,441.9 L369.0,442.4 L370.5,442.8 L372.0,443.2 L373.5,443.5 L375.0,443.8 L376.5,443.9 L378.0,444.1 L379.5,444.2 L381.0,444.4 L382.5,444.5 L384.0,444.6 L385.5,444.7 L387.0,444.8 L388.5,444.9 L390.0,445.0 L391.5,445.1 L393.0,445.2 L394.5,445.3 L396.0,445.4 L397.5,445.5 L399.0,445.6 L400.5,445.6 L402.0,445.7 L403.5,445.9 L405.0,446.0 L406.5,446.1 L408.0,446.3 L409.5,446.6 L411.0,446.9 L412.5,447.3 L414.0,447.8 L415.5,448.2 L417.0,448.7 L418.5,449.1 L420.0,449.5 L421.5,449.9 L423.0,450.3 L424.5,450.6 L426.0,450.9 L427.5,450.9 L429.0,450.8 L430.5,450.6 L432.0,450.4 L433.5,450.2 L435.0,449.9 L436.5,449.6 L438.0,449.3 L439.5,448.9 L441.0,448.5 L442.5,448.0 L444.0,447.5 L445.5,446.9 L447.0,446.3 L448.5,445.6 L450.0,444.9 L451.5,444.2 L453.0,443.5 L454.5,442.8 L456.0,442.3 L457.5,441.7 L459.0,441.2 L460.5,440.7 L462.0,440.3 L463.5,439.9 L465.0,439.5 L466.5,439.2 L468.0,438.9 L469.5,438.7 L471.0,438.4 L472.5,438.2 L474.0,438.0 L475.5,437.8 L477.0,437.6 L478.5,437.5 L480.0,437.3 L481.5,437.2 L483.0,437.0 L484.5,436.9 L486.0,436.8 L487.5,436.7 L489.0,436.7 L490.5,436.6 L492.0,436.6 L493.5,436.6 L495.0,436.5 L496.5,436.5 L498.0,436.5 L499.5,436.5 L501.0,436.4 L502.5,436.4 L504.0,436.3 L505.5,435.9 L507.0,435.2 L508.5,434.3 L510.0,433.4 L511.5,432.7 L513.0,432.1 L514.5,431.6 L516.0,431.1 L517.5,430.7 L519.0,430.4 L520.5,430.4 L522.0,430.5 L523.5,430.6 L525.0,430.8 L526.5,431.1 L528.0,431.3 L529.5,431.5 L531.0,431.6 L532.5,431.7 L534.0,431.8 L535.5,432.0 L537.0,432.0 L538.5,432.1 L540.0,432.1 L541.5,432.0 L543.0,431.8 L544.5,431.5 L546.0,431.2 L547.5,430.8 L549.0,430.5 L550.5,430.3 L552.0,429.9 L553.5,429.6 L555.0,429.3 L556.5,429.1 L558.0,428.9 L559.5,428.9 L561.0,429.1 L562.5,429.3 L564.0,429.7 L565.5,430.2 L567.0,430.7 L568.5,431.3 L570.0,431.9 L571.5,432.5 L573.0,433.2 L574.5,433.8 L576.0,434.4 L577.5,435.0 L579.0,435.5 L580.5,436.1 L582.0,436.7 L583.5,437.2 L585.0,437.8 L586.5,438.4 L588.0,439.0 L589.5,439.6 L591.0,440.2 L592.5,440.8 L594.0,441.4 L595.5,442.0 L597.0,442.6 L598.5,443.2 L600.0,443.8 L601.5,444.3 L603.0,444.9 L604.5,445.4 L606.0,445.9 L607.5,446.5 L609.0,447.0 L610.5,447.6 L612.0,448.1 L613.5,448.7 L615.0,449.2 L616.5,449.9 L618.0,450.5 L619.5,451.2 L621.0,451.8 L622.5,452.4 L624.0,452.9 L625.5,453.4 L627.0,453.9 L628.5,454.3 L630.0,454.7 L631.5,455.1 L633.0,455.4 L634.5,455.5 L636.0,455.4 L637.5,455.1 L639.0,454.6 L640.5,454.0 L642.0,453.4 L643.5,452.9 L645.0,452.4 L646.5,451.8 L648.0,451.2 L649.5,450.7 L651.0,450.3 L652.5,450.0 L654.0,449.8 L655.5,449.6 L657.0,449.4 L658.5,449.2 L660.0,449.0 L661.5,448.9 L663.0,448.7 L664.5,448.6 L666.0,448.5 L667.5,448.4 L669.0,448.3 L670.5,448.3 L672.0,448.3 L673.5,448.3 L675.0,448.5 L676.5,448.9 L678.0,449.4 L679.5,449.9 L681.0,450.5 L682.5,451.1 L684.0,451.7 L685.5,452.2 L687.0,452.6 L688.5,452.9 L690.0,453.0 L691.5,453.0 L693.0,452.8 L694.5,452.7 L696.0,452.5 L697.5,452.2 L699.0,451.9 L700.5,451.7 L702.0,451.4 L703.5,451.1 L705.0,450.9 L706.5,450.7 L708.0,450.6 L709.5,450.5 L711.0,450.5 L712.5,450.5 L714.0,450.5 L715.5,450.5 L717.0,450.5 L718.5,450.5 L720.0,450.5 L721.5,450.5 L723.0,450.5 L724.5,450.5 L726.0,450.5 L727.5,450.5 L729.0,450.5 L730.5,450.5 L732.0,450.4 L733.5,450.3 L735.0,450.2 L736.5,450.0 L738.0,449.7 L739.5,449.4 L741.0,449.1 L742.5,448.8 L744.0,448.5 L745.5,448.1 L747.0,447.6 L748.5,447.0 L750.0,446.3 L751.5,445.5 L753.0,444.7 L754.5,444.0 L756.0,443.2 L757.5,442.4 L759.0,441.5 L760.5,440.6 L762.0,439.8 L763.5,439.1 L765.0,438.8 L766.5,438.5 L768.0,438.3 L769.5,438.1 L771.0,437.9 L772.5,437.8 L774.0,437.7 L775.5,437.5 L777.0,437.4 L778.5,437.3 L780.0,437.2 L781.5,437.2 L783.0,437.1 L784.5,437.0 L786.0,437.0 L787.5,436.9 L789.0,436.8 L790.5,436.8 L792.0,436.7 L793.5,436.7 L795.0,436.7 L796.5,436.6 L798.0,436.6 L799.5,436.5 L801.0,436.5 L802.5,436.5 L804.0,436.5 L805.0,436.5 L805.0,453.5 L351.0,453.5 Z" fill="url(#gfcf)"/>
<path d="M351.0,432.5 L352.5,433.7 L354.0,434.9 L355.5,436.0 L357.0,437.1 L358.5,438.0 L360.0,438.8 L361.5,439.4 L363.0,440.1 L364.5,440.7 L366.0,441.3 L367.5,441.9 L369.0,442.4 L370.5,442.8 L372.0,443.2 L373.5,443.5 L375.0,443.8 L376.5,443.9 L378.0,444.1 L379.5,444.2 L381.0,444.4 L382.5,444.5 L384.0,444.6 L385.5,444.7 L387.0,444.8 L388.5,444.9 L390.0,445.0 L391.5,445.1 L393.0,445.2 L394.5,445.3 L396.0,445.4 L397.5,445.5 L399.0,445.6 L400.5,445.6 L402.0,445.7 L403.5,445.9 L405.0,446.0 L406.5,446.1 L408.0,446.3 L409.5,446.6 L411.0,446.9 L412.5,447.3 L414.0,447.8 L415.5,448.2 L417.0,448.7 L418.5,449.1 L420.0,449.5 L421.5,449.9 L423.0,450.3 L424.5,450.6 L426.0,450.9 L427.5,450.9 L429.0,450.8 L430.5,450.6 L432.0,450.4 L433.5,450.2 L435.0,449.9 L436.5,449.6 L438.0,449.3 L439.5,448.9 L441.0,448.5 L442.5,448.0 L444.0,447.5 L445.5,446.9 L447.0,446.3 L448.5,445.6 L450.0,444.9 L451.5,444.2 L453.0,443.5 L454.5,442.8 L456.0,442.3 L457.5,441.7 L459.0,441.2 L460.5,440.7 L462.0,440.3 L463.5,439.9 L465.0,439.5 L466.5,439.2 L468.0,438.9 L469.5,438.7 L471.0,438.4 L472.5,438.2 L474.0,438.0 L475.5,437.8 L477.0,437.6 L478.5,437.5 L480.0,437.3 L481.5,437.2 L483.0,437.0 L484.5,436.9 L486.0,436.8 L487.5,436.7 L489.0,436.7 L490.5,436.6 L492.0,436.6 L493.5,436.6 L495.0,436.5 L496.5,436.5 L498.0,436.5 L499.5,436.5 L501.0,436.4 L502.5,436.4 L504.0,436.3 L505.5,435.9 L507.0,435.2 L508.5,434.3 L510.0,433.4 L511.5,432.7 L513.0,432.1 L514.5,431.6 L516.0,431.1 L517.5,430.7 L519.0,430.4 L520.5,430.4 L522.0,430.5 L523.5,430.6 L525.0,430.8 L526.5,431.1 L528.0,431.3 L529.5,431.5 L531.0,431.6 L532.5,431.7 L534.0,431.8 L535.5,432.0 L537.0,432.0 L538.5,432.1 L540.0,432.1 L541.5,432.0 L543.0,431.8 L544.5,431.5 L546.0,431.2 L547.5,430.8 L549.0,430.5 L550.5,430.3 L552.0,429.9 L553.5,429.6 L555.0,429.3 L556.5,429.1 L558.0,428.9 L559.5,428.9 L561.0,429.1 L562.5,429.3 L564.0,429.7 L565.5,430.2 L567.0,430.7 L568.5,431.3 L570.0,431.9 L571.5,432.5 L573.0,433.2 L574.5,433.8 L576.0,434.4 L577.5,435.0 L579.0,435.5 L580.5,436.1 L582.0,436.7 L583.5,437.2 L585.0,437.8 L586.5,438.4 L588.0,439.0 L589.5,439.6 L591.0,440.2 L592.5,440.8 L594.0,441.4 L595.5,442.0 L597.0,442.6 L598.5,443.2 L600.0,443.8 L601.5,444.3 L603.0,444.9 L604.5,445.4 L606.0,445.9 L607.5,446.5 L609.0,447.0 L610.5,447.6 L612.0,448.1 L613.5,448.7 L615.0,449.2 L616.5,449.9 L618.0,450.5 L619.5,451.2 L621.0,451.8 L622.5,452.4 L624.0,452.9 L625.5,453.4 L627.0,453.9 L628.5,454.3 L630.0,454.7 L631.5,455.1 L633.0,455.4 L634.5,455.5 L636.0,455.4 L637.5,455.1 L639.0,454.6 L640.5,454.0 L642.0,453.4 L643.5,452.9 L645.0,452.4 L646.5,451.8 L648.0,451.2 L649.5,450.7 L651.0,450.3 L652.5,450.0 L654.0,449.8 L655.5,449.6 L657.0,449.4 L658.5,449.2 L660.0,449.0 L661.5,448.9 L663.0,448.7 L664.5,448.6 L666.0,448.5 L667.5,448.4 L669.0,448.3 L670.5,448.3 L672.0,448.3 L673.5,448.3 L675.0,448.5 L676.5,448.9 L678.0,449.4 L679.5,449.9 L681.0,450.5 L682.5,451.1 L684.0,451.7 L685.5,452.2 L687.0,452.6 L688.5,452.9 L690.0,453.0 L691.5,453.0 L693.0,452.8 L694.5,452.7 L696.0,452.5 L697.5,452.2 L699.0,451.9 L700.5,451.7 L702.0,451.4 L703.5,451.1 L705.0,450.9 L706.5,450.7 L708.0,450.6 L709.5,450.5 L711.0,450.5 L712.5,450.5 L714.0,450.5 L715.5,450.5 L717.0,450.5 L718.5,450.5 L720.0,450.5 L721.5,450.5 L723.0,450.5 L724.5,450.5 L726.0,450.5 L727.5,450.5 L729.0,450.5 L730.5,450.5 L732.0,450.4 L733.5,450.3 L735.0,450.2 L736.5,450.0 L738.0,449.7 L739.5,449.4 L741.0,449.1 L742.5,448.8 L744.0,448.5 L745.5,448.1 L747.0,447.6 L748.5,447.0 L750.0,446.3 L751.5,445.5 L753.0,444.7 L754.5,444.0 L756.0,443.2 L757.5,442.4 L759.0,441.5 L760.5,440.6 L762.0,439.8 L763.5,439.1 L765.0,438.8 L766.5,438.5 L768.0,438.3 L769.5,438.1 L771.0,437.9 L772.5,437.8 L774.0,437.7 L775.5,437.5 L777.0,437.4 L778.5,437.3 L780.0,437.2 L781.5,437.2 L783.0,437.1 L784.5,437.0 L786.0,437.0 L787.5,436.9 L789.0,436.8 L790.5,436.8 L792.0,436.7 L793.5,436.7 L795.0,436.7 L796.5,436.6 L798.0,436.6 L799.5,436.5 L801.0,436.5 L802.5,436.5 L804.0,436.5 L805.0,436.5" fill="none" stroke="#c7458b" stroke-width="3.2" stroke-linejoin="round" stroke-linecap="round"/>
<path d="M45.0,433.6 L46.5,433.4 L48.0,433.2 L49.5,433.1 L51.0,432.9 L52.5,432.7 L54.0,432.6 L55.5,432.4 L57.0,432.2 L58.5,432.0 L60.0,431.9 L61.5,431.7 L63.0,431.5 L64.5,431.3 L66.0,431.1 L67.5,430.9 L69.0,430.7 L70.5,430.5 L72.0,430.3 L73.5,430.1 L75.0,429.9 L76.5,429.7 L78.0,429.4 L79.5,429.2 L81.0,429.0 L82.5,428.7 L84.0,428.5 L85.5,428.3 L87.0,428.0 L88.5,427.8 L90.0,427.5 L91.5,427.2 L93.0,427.0 L94.5,426.7 L96.0,426.4 L97.5,426.1 L99.0,425.9 L100.5,425.6 L102.0,425.3 L103.5,425.0 L105.0,424.7 L106.5,424.4 L108.0,424.0 L109.5,423.7 L111.0,423.4 L112.5,423.1 L114.0,422.7 L115.5,422.4 L117.0,422.0 L118.5,421.7 L120.0,421.4 L121.5,421.0 L123.0,420.6 L124.5,420.2 L126.0,419.7 L127.5,419.1 L129.0,418.5 L130.5,417.9 L132.0,417.2 L133.5,416.5 L135.0,415.8 L136.5,415.1 L138.0,414.5 L139.5,413.9 L141.0,413.4 L142.5,412.8 L144.0,412.3 L145.5,411.7 L147.0,411.1 L148.5,410.6 L150.0,410.1 L151.5,409.6 L153.0,409.3 L154.5,409.0 L156.0,408.8 L157.5,408.8 L159.0,408.8 L160.5,408.8 L162.0,408.9 L163.5,409.1 L165.0,409.2 L166.5,409.4 L168.0,409.5 L169.5,409.7 L171.0,409.9 L172.5,410.0 L174.0,410.2 L175.5,410.3 L177.0,410.4 L178.5,410.5 L180.0,410.5 L181.5,410.5 L183.0,410.3 L184.5,410.2 L186.0,410.0 L187.5,409.7 L189.0,409.4 L190.5,409.2 L192.0,408.9 L193.5,408.6 L195.0,408.4 L196.5,408.2 L198.0,408.1 L199.5,408.0 L201.0,408.0 L202.5,408.0 L204.0,408.1 L205.5,408.2 L207.0,408.3 L208.5,408.4 L210.0,408.5 L211.5,408.6 L213.0,408.8 L214.5,408.9 L216.0,409.1 L217.5,409.2 L219.0,409.4 L220.5,409.6 L222.0,409.7 L223.5,409.9 L225.0,410.1 L226.5,410.3 L228.0,410.5 L229.5,410.7 L231.0,411.0 L232.5,411.2 L234.0,411.5 L235.5,411.9 L237.0,412.3 L238.5,412.9 L240.0,413.6 L241.5,414.3 L243.0,415.0 L244.5,415.6 L246.0,416.1 L247.5,416.7 L249.0,417.3 L250.5,417.9 L252.0,418.5 L253.5,418.9 L255.0,419.2 L256.5,419.2 L258.0,419.1 L259.5,418.9 L261.0,418.4 L262.5,418.0 L264.0,417.4 L265.5,416.8 L267.0,416.2 L268.5,415.6 L270.0,415.1 L271.5,414.7 L273.0,414.4 L274.5,414.3 L276.0,414.3 L277.5,414.5 L279.0,414.8 L280.5,415.3 L282.0,415.8 L283.5,416.4 L285.0,417.0 L286.5,417.5 L288.0,418.0 L289.5,418.4 L291.0,418.7 L292.5,418.8 L294.0,418.7 L295.5,418.7 L297.0,418.7 L298.5,418.6 L300.0,418.6 L301.5,418.5 L303.0,418.4 L304.5,418.4 L306.0,418.3 L307.5,418.3 L309.0,418.3 L310.5,418.3 L312.0,418.4 L313.5,418.6 L315.0,418.9 L316.5,419.3 L318.0,419.7 L319.5,420.2 L321.0,420.7 L322.5,421.2 L324.0,421.6 L325.5,422.0 L327.0,422.2 L328.5,422.4 L330.0,422.5 L331.5,422.5 L333.0,422.4 L334.5,422.4 L336.0,422.3 L337.5,422.1 L339.0,422.0 L340.5,421.9 L342.0,421.8 L343.5,421.6 L345.0,421.5 L346.5,421.4 L348.0,421.3 L349.5,421.3 L351.0,421.3 L352.5,421.3 L354.0,421.7 L355.5,422.2 L357.0,422.8 L358.5,423.6 L360.0,424.5 L361.5,425.4 L363.0,426.3 L364.5,427.2 L366.0,428.0 L367.5,428.7 L369.0,429.2 L370.5,429.6 L372.0,429.9 L373.5,430.2 L375.0,430.5 L376.5,430.8 L378.0,431.1 L379.5,431.3 L381.0,431.5 L382.5,431.6 L384.0,431.7 L385.5,431.8 L387.0,431.8 L388.5,431.8 L390.0,431.8 L391.5,431.8 L393.0,431.9 L394.5,431.9 L396.0,431.9 L397.5,431.9 L399.0,431.9 L400.5,431.9 L402.0,431.9 L403.5,431.9 L405.0,432.0 L406.5,432.0 L408.0,432.0 L409.5,432.1 L411.0,432.3 L412.5,432.6 L414.0,432.9 L415.5,433.2 L417.0,433.5 L418.5,433.9 L420.0,434.2 L421.5,434.5 L423.0,434.7 L424.5,434.9 L426.0,435.0 L427.5,435.0 L429.0,434.9 L430.5,434.7 L432.0,434.4 L433.5,434.1 L435.0,433.8 L436.5,433.4 L438.0,433.0 L439.5,432.5 L441.0,431.9 L442.5,431.3 L444.0,430.6 L445.5,429.9 L447.0,429.3 L448.5,428.5 L450.0,427.8 L451.5,427.0 L453.0,426.3 L454.5,425.5 L456.0,424.8 L457.5,424.0 L459.0,423.2 L460.5,422.5 L462.0,422.0 L463.5,421.7 L465.0,421.4 L466.5,421.2 L468.0,421.0 L469.5,420.9 L471.0,420.8 L472.5,420.8 L474.0,420.7 L475.5,420.7 L477.0,420.6 L478.5,420.6 L480.0,420.6 L481.5,420.6 L483.0,420.5 L484.5,420.5 L486.0,420.5 L487.5,420.5 L489.0,420.5 L490.5,420.5 L492.0,420.5 L493.5,420.6 L495.0,420.6 L496.5,420.6 L498.0,420.7 L499.5,420.7 L501.0,420.8 L502.5,420.8 L504.0,420.8 L505.5,420.8 L507.0,420.4 L508.5,419.7 L510.0,418.9 L511.5,418.1 L513.0,417.7 L514.5,417.3 L516.0,416.9 L517.5,416.5 L519.0,416.3 L520.5,416.2 L522.0,416.2 L523.5,416.4 L525.0,416.6 L526.5,416.9 L528.0,417.2 L529.5,417.4 L531.0,417.6 L532.5,417.8 L534.0,418.0 L535.5,418.2 L537.0,418.3 L538.5,418.4 L540.0,418.4 L541.5,418.3 L543.0,418.0 L544.5,417.7 L546.0,417.4 L547.5,417.0 L549.0,416.7 L550.5,416.5 L552.0,416.2 L553.5,416.0 L555.0,415.8 L556.5,415.6 L558.0,415.5 L559.5,415.5 L561.0,415.6 L562.5,415.8 L564.0,416.1 L565.5,416.4 L567.0,416.8 L568.5,417.2 L570.0,417.6 L571.5,418.0 L573.0,418.3 L574.5,418.7 L576.0,419.0 L577.5,419.2 L579.0,419.5 L580.5,419.6 L582.0,419.8 L583.5,420.0 L585.0,420.1 L586.5,420.3 L588.0,420.4 L589.5,420.6 L591.0,420.8 L592.5,420.9 L594.0,421.1 L595.5,421.3 L597.0,421.5 L598.5,421.8 L600.0,422.0 L601.5,422.3 L603.0,422.6 L604.5,422.9 L606.0,423.1 L607.5,423.4 L609.0,423.6 L610.5,423.8 L612.0,424.0 L613.5,424.3 L615.0,424.5 L616.5,424.7 L618.0,424.9 L619.5,425.1 L621.0,425.3 L622.5,425.5 L624.0,425.6 L625.5,425.7 L627.0,425.7 L628.5,425.7 L630.0,425.7 L631.5,425.6 L633.0,425.4 L634.5,425.3 L636.0,425.1 L637.5,424.9 L639.0,424.7 L640.5,424.4 L642.0,424.0 L643.5,423.5 L645.0,422.8 L646.5,422.2 L648.0,421.5 L649.5,421.0 L651.0,420.6 L652.5,420.5 L654.0,420.5 L655.5,420.6 L657.0,420.6 L658.5,420.7 L660.0,420.8 L661.5,420.9 L663.0,421.1 L664.5,421.2 L666.0,421.4 L667.5,421.6 L669.0,421.9 L670.5,422.3 L672.0,422.7 L673.5,423.2 L675.0,423.7 L676.5,424.2 L678.0,424.7 L679.5,425.3 L681.0,426.0 L682.5,426.8 L684.0,427.6 L685.5,428.3 L687.0,429.0 L688.5,429.6 L690.0,430.0 L691.5,430.3 L693.0,430.6 L694.5,430.9 L696.0,431.1 L697.5,431.4 L699.0,431.6 L700.5,431.8 L702.0,432.0 L703.5,432.2 L705.0,432.3 L706.5,432.4 L708.0,432.5 L709.5,432.5 L711.0,432.5 L712.5,432.5 L714.0,432.4 L715.5,432.4 L717.0,432.3 L718.5,432.2 L720.0,432.1 L721.5,432.0 L723.0,431.9 L724.5,431.7 L726.0,431.6 L727.5,431.5 L729.0,431.3 L730.5,431.2 L732.0,431.1 L733.5,430.9 L735.0,430.7 L736.5,430.5 L738.0,430.3 L739.5,430.1 L741.0,429.8 L742.5,429.6 L744.0,429.3 L745.5,429.0 L747.0,428.7 L748.5,428.4 L750.0,428.0 L751.5,427.5 L753.0,426.9 L754.5,426.2 L756.0,425.4 L757.5,424.5 L759.0,423.7 L760.5,422.9 L762.0,422.2 L763.5,421.7 L765.0,421.2 L766.5,421.0 L768.0,420.7 L769.5,420.4 L771.0,420.2 L772.5,419.9 L774.0,419.7 L775.5,419.5 L777.0,419.3 L778.5,419.2 L780.0,419.0 L781.5,418.9 L783.0,418.8 L784.5,418.8 L786.0,418.7 L787.5,418.7 L789.0,418.6 L790.5,418.6 L792.0,418.6 L793.5,418.5 L795.0,418.5 L796.5,418.5 L798.0,418.4 L799.5,418.4 L801.0,418.4 L802.5,418.4 L804.0,418.4 L805.0,418.4 L805.0,453.5 L45.0,453.5 Z" fill="url(#gcfo)"/>
<path d="M45.0,433.6 L46.5,433.4 L48.0,433.2 L49.5,433.1 L51.0,432.9 L52.5,432.7 L54.0,432.6 L55.5,432.4 L57.0,432.2 L58.5,432.0 L60.0,431.9 L61.5,431.7 L63.0,431.5 L64.5,431.3 L66.0,431.1 L67.5,430.9 L69.0,430.7 L70.5,430.5 L72.0,430.3 L73.5,430.1 L75.0,429.9 L76.5,429.7 L78.0,429.4 L79.5,429.2 L81.0,429.0 L82.5,428.7 L84.0,428.5 L85.5,428.3 L87.0,428.0 L88.5,427.8 L90.0,427.5 L91.5,427.2 L93.0,427.0 L94.5,426.7 L96.0,426.4 L97.5,426.1 L99.0,425.9 L100.5,425.6 L102.0,425.3 L103.5,425.0 L105.0,424.7 L106.5,424.4 L108.0,424.0 L109.5,423.7 L111.0,423.4 L112.5,423.1 L114.0,422.7 L115.5,422.4 L117.0,422.0 L118.5,421.7 L120.0,421.4 L121.5,421.0 L123.0,420.6 L124.5,420.2 L126.0,419.7 L127.5,419.1 L129.0,418.5 L130.5,417.9 L132.0,417.2 L133.5,416.5 L135.0,415.8 L136.5,415.1 L138.0,414.5 L139.5,413.9 L141.0,413.4 L142.5,412.8 L144.0,412.3 L145.5,411.7 L147.0,411.1 L148.5,410.6 L150.0,410.1 L151.5,409.6 L153.0,409.3 L154.5,409.0 L156.0,408.8 L157.5,408.8 L159.0,408.8 L160.5,408.8 L162.0,408.9 L163.5,409.1 L165.0,409.2 L166.5,409.4 L168.0,409.5 L169.5,409.7 L171.0,409.9 L172.5,410.0 L174.0,410.2 L175.5,410.3 L177.0,410.4 L178.5,410.5 L180.0,410.5 L181.5,410.5 L183.0,410.3 L184.5,410.2 L186.0,410.0 L187.5,409.7 L189.0,409.4 L190.5,409.2 L192.0,408.9 L193.5,408.6 L195.0,408.4 L196.5,408.2 L198.0,408.1 L199.5,408.0 L201.0,408.0 L202.5,408.0 L204.0,408.1 L205.5,408.2 L207.0,408.3 L208.5,408.4 L210.0,408.5 L211.5,408.6 L213.0,408.8 L214.5,408.9 L216.0,409.1 L217.5,409.2 L219.0,409.4 L220.5,409.6 L222.0,409.7 L223.5,409.9 L225.0,410.1 L226.5,410.3 L228.0,410.5 L229.5,410.7 L231.0,411.0 L232.5,411.2 L234.0,411.5 L235.5,411.9 L237.0,412.3 L238.5,412.9 L240.0,413.6 L241.5,414.3 L243.0,415.0 L244.5,415.6 L246.0,416.1 L247.5,416.7 L249.0,417.3 L250.5,417.9 L252.0,418.5 L253.5,418.9 L255.0,419.2 L256.5,419.2 L258.0,419.1 L259.5,418.9 L261.0,418.4 L262.5,418.0 L264.0,417.4 L265.5,416.8 L267.0,416.2 L268.5,415.6 L270.0,415.1 L271.5,414.7 L273.0,414.4 L274.5,414.3 L276.0,414.3 L277.5,414.5 L279.0,414.8 L280.5,415.3 L282.0,415.8 L283.5,416.4 L285.0,417.0 L286.5,417.5 L288.0,418.0 L289.5,418.4 L291.0,418.7 L292.5,418.8 L294.0,418.7 L295.5,418.7 L297.0,418.7 L298.5,418.6 L300.0,418.6 L301.5,418.5 L303.0,418.4 L304.5,418.4 L306.0,418.3 L307.5,418.3 L309.0,418.3 L310.5,418.3 L312.0,418.4 L313.5,418.6 L315.0,418.9 L316.5,419.3 L318.0,419.7 L319.5,420.2 L321.0,420.7 L322.5,421.2 L324.0,421.6 L325.5,422.0 L327.0,422.2 L328.5,422.4 L330.0,422.5 L331.5,422.5 L333.0,422.4 L334.5,422.4 L336.0,422.3 L337.5,422.1 L339.0,422.0 L340.5,421.9 L342.0,421.8 L343.5,421.6 L345.0,421.5 L346.5,421.4 L348.0,421.3 L349.5,421.3 L351.0,421.3 L352.5,421.3 L354.0,421.7 L355.5,422.2 L357.0,422.8 L358.5,423.6 L360.0,424.5 L361.5,425.4 L363.0,426.3 L364.5,427.2 L366.0,428.0 L367.5,428.7 L369.0,429.2 L370.5,429.6 L372.0,429.9 L373.5,430.2 L375.0,430.5 L376.5,430.8 L378.0,431.1 L379.5,431.3 L381.0,431.5 L382.5,431.6 L384.0,431.7 L385.5,431.8 L387.0,431.8 L388.5,431.8 L390.0,431.8 L391.5,431.8 L393.0,431.9 L394.5,431.9 L396.0,431.9 L397.5,431.9 L399.0,431.9 L400.5,431.9 L402.0,431.9 L403.5,431.9 L405.0,432.0 L406.5,432.0 L408.0,432.0 L409.5,432.1 L411.0,432.3 L412.5,432.6 L414.0,432.9 L415.5,433.2 L417.0,433.5 L418.5,433.9 L420.0,434.2 L421.5,434.5 L423.0,434.7 L424.5,434.9 L426.0,435.0 L427.5,435.0 L429.0,434.9 L430.5,434.7 L432.0,434.4 L433.5,434.1 L435.0,433.8 L436.5,433.4 L438.0,433.0 L439.5,432.5 L441.0,431.9 L442.5,431.3 L444.0,430.6 L445.5,429.9 L447.0,429.3 L448.5,428.5 L450.0,427.8 L451.5,427.0 L453.0,426.3 L454.5,425.5 L456.0,424.8 L457.5,424.0 L459.0,423.2 L460.5,422.5 L462.0,422.0 L463.5,421.7 L465.0,421.4 L466.5,421.2 L468.0,421.0 L469.5,420.9 L471.0,420.8 L472.5,420.8 L474.0,420.7 L475.5,420.7 L477.0,420.6 L478.5,420.6 L480.0,420.6 L481.5,420.6 L483.0,420.5 L484.5,420.5 L486.0,420.5 L487.5,420.5 L489.0,420.5 L490.5,420.5 L492.0,420.5 L493.5,420.6 L495.0,420.6 L496.5,420.6 L498.0,420.7 L499.5,420.7 L501.0,420.8 L502.5,420.8 L504.0,420.8 L505.5,420.8 L507.0,420.4 L508.5,419.7 L510.0,418.9 L511.5,418.1 L513.0,417.7 L514.5,417.3 L516.0,416.9 L517.5,416.5 L519.0,416.3 L520.5,416.2 L522.0,416.2 L523.5,416.4 L525.0,416.6 L526.5,416.9 L528.0,417.2 L529.5,417.4 L531.0,417.6 L532.5,417.8 L534.0,418.0 L535.5,418.2 L537.0,418.3 L538.5,418.4 L540.0,418.4 L541.5,418.3 L543.0,418.0 L544.5,417.7 L546.0,417.4 L547.5,417.0 L549.0,416.7 L550.5,416.5 L552.0,416.2 L553.5,416.0 L555.0,415.8 L556.5,415.6 L558.0,415.5 L559.5,415.5 L561.0,415.6 L562.5,415.8 L564.0,416.1 L565.5,416.4 L567.0,416.8 L568.5,417.2 L570.0,417.6 L571.5,418.0 L573.0,418.3 L574.5,418.7 L576.0,419.0 L577.5,419.2 L579.0,419.5 L580.5,419.6 L582.0,419.8 L583.5,420.0 L585.0,420.1 L586.5,420.3 L588.0,420.4 L589.5,420.6 L591.0,420.8 L592.5,420.9 L594.0,421.1 L595.5,421.3 L597.0,421.5 L598.5,421.8 L600.0,422.0 L601.5,422.3 L603.0,422.6 L604.5,422.9 L606.0,423.1 L607.5,423.4 L609.0,423.6 L610.5,423.8 L612.0,424.0 L613.5,424.3 L615.0,424.5 L616.5,424.7 L618.0,424.9 L619.5,425.1 L621.0,425.3 L622.5,425.5 L624.0,425.6 L625.5,425.7 L627.0,425.7 L628.5,425.7 L630.0,425.7 L631.5,425.6 L633.0,425.4 L634.5,425.3 L636.0,425.1 L637.5,424.9 L639.0,424.7 L640.5,424.4 L642.0,424.0 L643.5,423.5 L645.0,422.8 L646.5,422.2 L648.0,421.5 L649.5,421.0 L651.0,420.6 L652.5,420.5 L654.0,420.5 L655.5,420.6 L657.0,420.6 L658.5,420.7 L660.0,420.8 L661.5,420.9 L663.0,421.1 L664.5,421.2 L666.0,421.4 L667.5,421.6 L669.0,421.9 L670.5,422.3 L672.0,422.7 L673.5,423.2 L675.0,423.7 L676.5,424.2 L678.0,424.7 L679.5,425.3 L681.0,426.0 L682.5,426.8 L684.0,427.6 L685.5,428.3 L687.0,429.0 L688.5,429.6 L690.0,430.0 L691.5,430.3 L693.0,430.6 L694.5,430.9 L696.0,431.1 L697.5,431.4 L699.0,431.6 L700.5,431.8 L702.0,432.0 L703.5,432.2 L705.0,432.3 L706.5,432.4 L708.0,432.5 L709.5,432.5 L711.0,432.5 L712.5,432.5 L714.0,432.4 L715.5,432.4 L717.0,432.3 L718.5,432.2 L720.0,432.1 L721.5,432.0 L723.0,431.9 L724.5,431.7 L726.0,431.6 L727.5,431.5 L729.0,431.3 L730.5,431.2 L732.0,431.1 L733.5,430.9 L735.0,430.7 L736.5,430.5 L738.0,430.3 L739.5,430.1 L741.0,429.8 L742.5,429.6 L744.0,429.3 L745.5,429.0 L747.0,428.7 L748.5,428.4 L750.0,428.0 L751.5,427.5 L753.0,426.9 L754.5,426.2 L756.0,425.4 L757.5,424.5 L759.0,423.7 L760.5,422.9 L762.0,422.2 L763.5,421.7 L765.0,421.2 L766.5,421.0 L768.0,420.7 L769.5,420.4 L771.0,420.2 L772.5,419.9 L774.0,419.7 L775.5,419.5 L777.0,419.3 L778.5,419.2 L780.0,419.0 L781.5,418.9 L783.0,418.8 L784.5,418.8 L786.0,418.7 L787.5,418.7 L789.0,418.6 L790.5,418.6 L792.0,418.6 L793.5,418.5 L795.0,418.5 L796.5,418.5 L798.0,418.4 L799.5,418.4 L801.0,418.4 L802.5,418.4 L804.0,418.4 L805.0,418.4" fill="none" stroke="#ebaf64" stroke-width="3.2" stroke-linejoin="round" stroke-linecap="round"/>
<path d="M427.0,425.6 L428.5,425.7 L430.0,425.8 L431.5,425.9 L433.0,425.9 L434.5,426.0 L436.0,426.1 L437.5,426.1 L439.0,426.2 L440.5,426.2 L442.0,426.2 L443.5,426.2 L445.0,426.2 L446.5,426.2 L448.0,426.2 L449.5,426.2 L451.0,426.1 L452.5,426.1 L454.0,426.0 L455.5,425.9 L457.0,425.8 L458.5,425.7 L460.0,425.6 L461.5,425.5 L463.0,425.4 L464.5,425.3 L466.0,425.2 L467.5,425.1 L469.0,425.0 L470.5,424.9 L472.0,424.8 L473.5,424.8 L475.0,424.7 L476.5,424.6 L478.0,424.6 L479.5,424.5 L481.0,424.5 L482.5,424.5 L484.0,424.5 L485.5,424.5 L487.0,424.6 L488.5,424.6 L490.0,424.7 L491.5,424.8 L493.0,424.8 L494.5,424.9 L496.0,425.0 L497.5,425.1 L499.0,425.1 L500.5,425.2 L502.0,425.2 L503.5,425.2 L505.0,425.2 L506.5,425.2 L508.0,425.2 L509.5,425.2 L511.0,425.2 L512.5,425.1 L514.0,425.1 L515.5,425.0 L517.0,425.0 L518.5,424.9 L520.0,424.9 L521.5,424.8 L523.0,424.7 L524.5,424.7 L526.0,424.6 L527.5,424.5 L529.0,424.5 L530.5,424.4 L532.0,424.4 L533.5,424.3 L535.0,424.3 L536.5,424.3 L538.0,424.3 L539.5,424.3 L541.0,424.3 L542.5,424.3 L544.0,424.3 L545.5,424.3 L547.0,424.3 L548.5,424.3 L550.0,424.3 L551.5,424.3 L553.0,424.4 L554.5,424.4 L556.0,424.4 L557.5,424.4 L559.0,424.4 L560.5,424.4 L562.0,424.5 L563.5,424.5 L565.0,424.5 L566.5,424.5 L568.0,424.5 L569.5,424.5 L571.0,424.5 L572.5,424.5 L574.0,424.5 L575.5,424.5 L577.0,424.4 L578.5,424.4 L580.0,424.4 L581.5,424.4 L583.0,424.3 L584.5,424.3 L586.0,424.2 L587.5,424.2 L589.0,424.2 L590.5,424.1 L592.0,424.1 L593.5,424.0 L595.0,424.0 L596.5,424.0 L598.0,423.9 L599.5,423.9 L601.0,423.8 L602.5,423.8 L604.0,423.7 L605.5,423.7 L607.0,423.6 L608.5,423.5 L610.0,423.5 L611.5,423.4 L613.0,423.3 L614.5,423.3 L616.0,423.2 L617.5,423.1 L619.0,423.0 L620.5,422.9 L622.0,422.8 L623.5,422.6 L625.0,422.5 L626.5,422.4 L628.0,422.3 L629.5,422.2 L631.0,422.1 L632.5,422.0 L634.0,422.0 L635.5,422.0 L637.0,422.1 L638.5,422.3 L640.0,422.6 L641.5,422.9 L643.0,423.3 L644.5,423.7 L646.0,424.2 L647.5,424.6 L649.0,424.9 L650.5,425.2 L652.0,425.4 L653.5,425.6 L655.0,425.7 L656.5,425.8 L658.0,425.9 L659.5,426.0 L661.0,426.1 L662.5,426.2 L664.0,426.3 L665.5,426.4 L667.0,426.4 L668.5,426.5 L670.0,426.6 L671.5,426.7 L673.0,426.8 L674.5,426.9 L676.0,427.0 L677.5,427.1 L679.0,427.2 L680.5,427.3 L682.0,427.4 L683.5,427.6 L685.0,427.7 L686.5,427.8 L688.0,427.9 L689.5,428.0 L691.0,428.1 L692.5,428.2 L694.0,428.3 L695.5,428.4 L697.0,428.5 L698.5,428.6 L700.0,428.7 L701.5,428.8 L703.0,428.9 L704.5,429.0 L706.0,429.1 L707.5,429.1 L709.0,429.2 L710.5,429.2 L712.0,429.2 L713.5,429.2 L715.0,429.0 L716.5,428.7 L718.0,428.3 L719.5,427.8 L721.0,427.3 L722.5,426.8 L724.0,426.3 L725.5,425.8 L727.0,425.4 L728.5,425.2 L730.0,425.0 L731.5,424.9 L733.0,424.9 L734.5,424.8 L736.0,424.7 L737.5,424.7 L739.0,424.6 L740.5,424.6 L742.0,424.6 L743.5,424.5 L745.0,424.5 L746.5,424.5 L748.0,424.4 L749.5,424.4 L751.0,424.4 L752.5,424.3 L754.0,424.3 L755.5,424.2 L757.0,424.2 L758.5,424.1 L760.0,424.0 L761.5,424.0 L763.0,423.9 L764.5,423.8 L766.0,423.8 L767.5,423.7 L769.0,423.6 L770.5,423.5 L772.0,423.5 L773.5,423.4 L775.0,423.3 L776.5,423.3 L778.0,423.2 L779.5,423.2 L781.0,423.1 L782.5,423.1 L784.0,423.0 L785.5,423.0 L787.0,422.9 L788.5,422.9 L790.0,422.8 L791.5,422.8 L793.0,422.7 L794.5,422.7 L796.0,422.6 L797.5,422.6 L799.0,422.6 L800.5,422.5 L802.0,422.5 L803.5,422.4 L805.0,422.4 L805.0,453.5 L427.0,453.5 Z" fill="url(#gopex)"/>
<path d="M427.0,425.6 L428.5,425.7 L430.0,425.8 L431.5,425.9 L433.0,425.9 L434.5,426.0 L436.0,426.1 L437.5,426.1 L439.0,426.2 L440.5,426.2 L442.0,426.2 L443.5,426.2 L445.0,426.2 L446.5,426.2 L448.0,426.2 L449.5,426.2 L451.0,426.1 L452.5,426.1 L454.0,426.0 L455.5,425.9 L457.0,425.8 L458.5,425.7 L460.0,425.6 L461.5,425.5 L463.0,425.4 L464.5,425.3 L466.0,425.2 L467.5,425.1 L469.0,425.0 L470.5,424.9 L472.0,424.8 L473.5,424.8 L475.0,424.7 L476.5,424.6 L478.0,424.6 L479.5,424.5 L481.0,424.5 L482.5,424.5 L484.0,424.5 L485.5,424.5 L487.0,424.6 L488.5,424.6 L490.0,424.7 L491.5,424.8 L493.0,424.8 L494.5,424.9 L496.0,425.0 L497.5,425.1 L499.0,425.1 L500.5,425.2 L502.0,425.2 L503.5,425.2 L505.0,425.2 L506.5,425.2 L508.0,425.2 L509.5,425.2 L511.0,425.2 L512.5,425.1 L514.0,425.1 L515.5,425.0 L517.0,425.0 L518.5,424.9 L520.0,424.9 L521.5,424.8 L523.0,424.7 L524.5,424.7 L526.0,424.6 L527.5,424.5 L529.0,424.5 L530.5,424.4 L532.0,424.4 L533.5,424.3 L535.0,424.3 L536.5,424.3 L538.0,424.3 L539.5,424.3 L541.0,424.3 L542.5,424.3 L544.0,424.3 L545.5,424.3 L547.0,424.3 L548.5,424.3 L550.0,424.3 L551.5,424.3 L553.0,424.4 L554.5,424.4 L556.0,424.4 L557.5,424.4 L559.0,424.4 L560.5,424.4 L562.0,424.5 L563.5,424.5 L565.0,424.5 L566.5,424.5 L568.0,424.5 L569.5,424.5 L571.0,424.5 L572.5,424.5 L574.0,424.5 L575.5,424.5 L577.0,424.4 L578.5,424.4 L580.0,424.4 L581.5,424.4 L583.0,424.3 L584.5,424.3 L586.0,424.2 L587.5,424.2 L589.0,424.2 L590.5,424.1 L592.0,424.1 L593.5,424.0 L595.0,424.0 L596.5,424.0 L598.0,423.9 L599.5,423.9 L601.0,423.8 L602.5,423.8 L604.0,423.7 L605.5,423.7 L607.0,423.6 L608.5,423.5 L610.0,423.5 L611.5,423.4 L613.0,423.3 L614.5,423.3 L616.0,423.2 L617.5,423.1 L619.0,423.0 L620.5,422.9 L622.0,422.8 L623.5,422.6 L625.0,422.5 L626.5,422.4 L628.0,422.3 L629.5,422.2 L631.0,422.1 L632.5,422.0 L634.0,422.0 L635.5,422.0 L637.0,422.1 L638.5,422.3 L640.0,422.6 L641.5,422.9 L643.0,423.3 L644.5,423.7 L646.0,424.2 L647.5,424.6 L649.0,424.9 L650.5,425.2 L652.0,425.4 L653.5,425.6 L655.0,425.7 L656.5,425.8 L658.0,425.9 L659.5,426.0 L661.0,426.1 L662.5,426.2 L664.0,426.3 L665.5,426.4 L667.0,426.4 L668.5,426.5 L670.0,426.6 L671.5,426.7 L673.0,426.8 L674.5,426.9 L676.0,427.0 L677.5,427.1 L679.0,427.2 L680.5,427.3 L682.0,427.4 L683.5,427.6 L685.0,427.7 L686.5,427.8 L688.0,427.9 L689.5,428.0 L691.0,428.1 L692.5,428.2 L694.0,428.3 L695.5,428.4 L697.0,428.5 L698.5,428.6 L700.0,428.7 L701.5,428.8 L703.0,428.9 L704.5,429.0 L706.0,429.1 L707.5,429.1 L709.0,429.2 L710.5,429.2 L712.0,429.2 L713.5,429.2 L715.0,429.0 L716.5,428.7 L718.0,428.3 L719.5,427.8 L721.0,427.3 L722.5,426.8 L724.0,426.3 L725.5,425.8 L727.0,425.4 L728.5,425.2 L730.0,425.0 L731.5,424.9 L733.0,424.9 L734.5,424.8 L736.0,424.7 L737.5,424.7 L739.0,424.6 L740.5,424.6 L742.0,424.6 L743.5,424.5 L745.0,424.5 L746.5,424.5 L748.0,424.4 L749.5,424.4 L751.0,424.4 L752.5,424.3 L754.0,424.3 L755.5,424.2 L757.0,424.2 L758.5,424.1 L760.0,424.0 L761.5,424.0 L763.0,423.9 L764.5,423.8 L766.0,423.8 L767.5,423.7 L769.0,423.6 L770.5,423.5 L772.0,423.5 L773.5,423.4 L775.0,423.3 L776.5,423.3 L778.0,423.2 L779.5,423.2 L781.0,423.1 L782.5,423.1 L784.0,423.0 L785.5,423.0 L787.0,422.9 L788.5,422.9 L790.0,422.8 L791.5,422.8 L793.0,422.7 L794.5,422.7 L796.0,422.6 L797.5,422.6 L799.0,422.6 L800.5,422.5 L802.0,422.5 L803.5,422.4 L805.0,422.4" fill="none" stroke="#a54bf0" stroke-width="3.2" stroke-linejoin="round" stroke-linecap="round"/>
<rect x="729.5" y="178" width="75.5" height="300.5" fill="url(#ghl)"/>
</g>
<rect x="16" y="452.8" width="789" height="1.15" fill="#fff"/>
<rect x="16" y="478" width="789" height="1" fill="#4a515c"/>
<rect x="47.5" y="478" width="1" height="5" fill="#4a515c"/>
<rect x="123.2" y="478" width="1" height="5" fill="#4a515c"/>
<rect x="199.0" y="478" width="1" height="5" fill="#4a515c"/>
<rect x="274.8" y="478" width="1" height="5" fill="#4a515c"/>
<rect x="350.5" y="478" width="1" height="5" fill="#4a515c"/>
<rect x="426.2" y="478" width="1" height="5" fill="#4a515c"/>
<rect x="502.0" y="478" width="1" height="5" fill="#4a515c"/>
<rect x="577.8" y="478" width="1" height="5" fill="#4a515c"/>
<rect x="653.5" y="478" width="1" height="5" fill="#4a515c"/>
<rect x="729.2" y="478" width="1" height="5" fill="#4a515c"/>
<g clip-path="url(#clip)">
<circle cx="805" cy="288.2" r="4" fill="#2394df" stroke="#fff" stroke-width="1"/>
<circle cx="805" cy="452.3" r="4" fill="#71e7d6" stroke="#fff" stroke-width="1"/>
<circle cx="805" cy="436.5" r="4" fill="#c7458b" stroke="#fff" stroke-width="1"/>
<circle cx="805" cy="418.4" r="4" fill="#ebaf64" stroke="#fff" stroke-width="1"/>
<circle cx="805" cy="422.4" r="4" fill="#a54bf0" stroke="#fff" stroke-width="1"/>
</g>
</svg>
<div class="t ax" id="y22" style="left:23.5px;top:160.9px">CN¥22b</div>
<div class="t ax" id="y0" style="left:23.5px;top:435.7px">CN¥0</div>
<div class="t ax" id="ym2" style="left:23.7px;top:461px">-CN¥2b</div>
<div class="t yr" style="left:18.0px;top:486px">2014</div>
<div class="t yr" style="left:93.8px;top:486px">2015</div>
<div class="t yr" style="left:169.5px;top:486px">2016</div>
<div class="t yr" style="left:245.2px;top:486px">2017</div>
<div class="t yr" style="left:321.0px;top:486px">2018</div>
<div class="t yr" style="left:396.8px;top:486px">2019</div>
<div class="t yr" style="left:472.5px;top:486px">2020</div>
<div class="t yr" style="left:548.2px;top:486px">2021</div>
<div class="t yr" style="left:624.0px;top:486px">2022</div>
<div class="t yr" style="left:699.8px;top:486px">2023</div>
<div id="tip">
<div class="t hd" style="top:9.93px">Dec 31 2023</div>
<div class="t lb" style="top:27.730000000000004px">Revenue</div>
<div class="t vl" style="top:27.730000000000004px;color:#2394df">CN¥13.184b <i>/yr</i></div>
<div class="t lb" style="top:44.730000000000004px">Earnings</div>
<div class="t vl" style="top:44.730000000000004px;color:#71e7d6">CN¥52.166m <i>/yr</i></div>
<div class="t vl" style="top:61.83px;color:#fff">0.4% <i class="pm">profit margin</i></div>
<div class="t lb" style="top:78.93px">Free Cash Flow</div>
<div class="t vl" style="top:78.93px;color:#c7458b">CN¥1.317b <i>/yr</i></div>
<div class="t lb" style="top:96.63px">Cash From Op</div>
<div class="t vl" style="top:96.63px;color:#ebaf64">CN¥2.764b <i>/yr</i></div>
<div class="t lb" style="top:114.03px">Operating Expenses</div>
<div class="t vl" style="top:114.03px;color:#a54bf0">CN¥2.448b <i>/yr</i></div>
<div class="sep" style="top:24.90px"></div>
<div class="sep" style="top:42.00px"></div>
<div class="sep" style="top:76.00px"></div>
<div class="sep" style="top:93.90px"></div>
<div class="sep" style="top:111.00px"></div>
<div class="sep" style="top:128.70px"></div>
</div>
<div class="lg" style="left:16.25px;width:81.5px"><b style="background:#2394df"></b><span style="letter-spacing:0px">Revenue</span></div>
<div class="lg" style="left:102.25px;width:82.25px"><b style="background:#71e7d6"></b><span style="letter-spacing:0.05px">Earnings</span></div>
<div class="lg" style="left:189.25px;width:115.5px"><b style="background:#c7458b"></b><span style="letter-spacing:0.06px">Free Cash Flow</span></div>
<div class="lg" style="left:309.25px;width:110.25px"><b style="background:#ebaf64"></b><span style="letter-spacing:0.12px">Cash From Op</span></div>
<div class="lg" style="left:424.25px;width:139.75px"><b style="background:#a54bf0"></b><span style="letter-spacing:0.17px">Operating Expenses</span></div>
</body></html>
